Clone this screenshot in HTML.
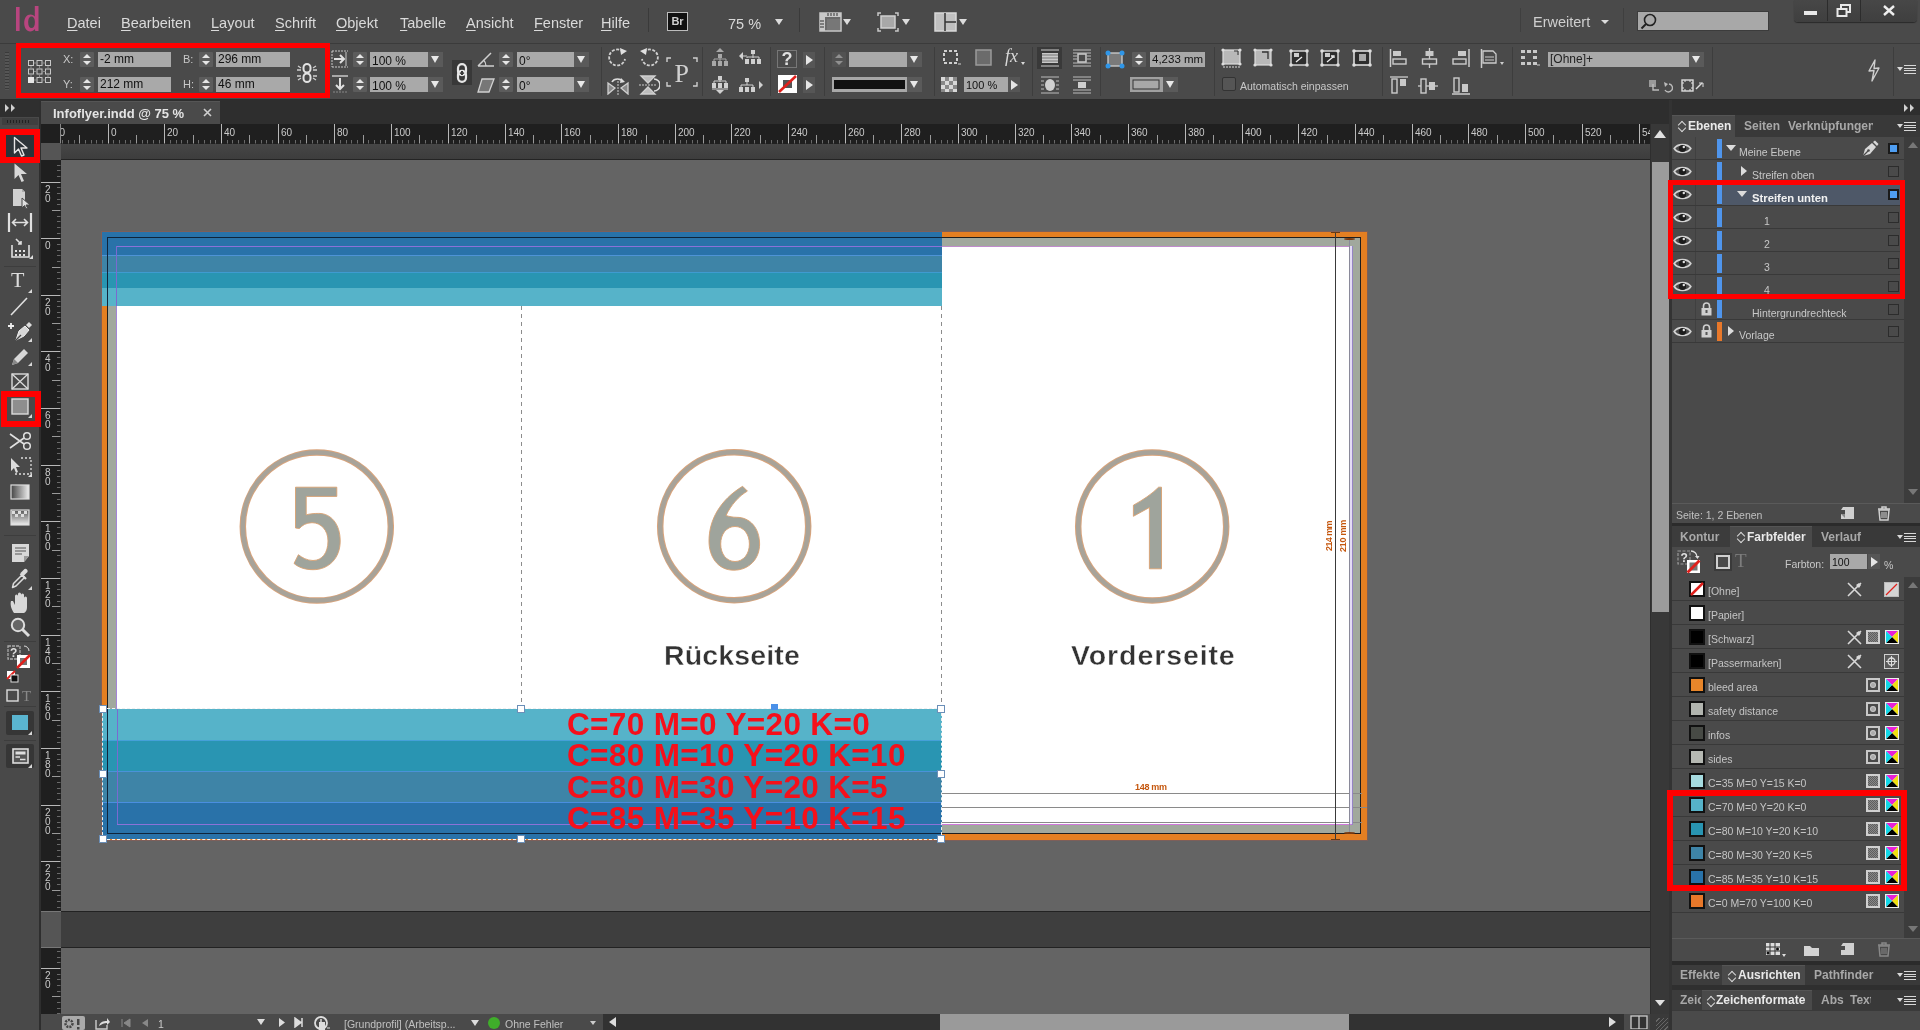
<!DOCTYPE html>
<html><head><meta charset="utf-8">
<style>
*{box-sizing:border-box;margin:0;padding:0}
html,body{width:1920px;height:1030px;overflow:hidden;background:#4a4a4a;font-family:"Liberation Sans",sans-serif;position:relative}
body{will-change:transform}
.a,.mi,.tri,.lbl,.spin,.fld,.dd,.arb,.sep,.menuic,.ctri,.hd,.lt,.tabt,.tab{position:absolute}
.mi{top:15px;font-size:14.5px;color:#dadada;white-space:nowrap}
.mi u{text-decoration:underline;text-underline-offset:2px;text-decoration-thickness:1px}
.tri{width:0;height:0;border-style:solid;border-width:6px 4.5px 0 4.5px;border-color:#dcdcdc transparent transparent}
.lbl{font-size:11px;color:#c8c8c8;white-space:nowrap}
.spin{width:14px;height:15px;background:#5c5c5c;border-radius:1px}
.spin:before{content:"";position:absolute;left:3px;top:2px;border-style:solid;border-width:0 4px 4px 4px;border-color:transparent transparent #e6e6e6}
.spin:after{content:"";position:absolute;left:3px;top:9px;border-style:solid;border-width:4px 4px 0 4px;border-color:#e6e6e6 transparent transparent}
.fld{height:15px;background:#a9a9a9;color:#111;font-size:12px;line-height:15px;padding-left:2px;white-space:nowrap;overflow:hidden}
.dd{width:15px;height:15px;background:#5a5a5a}
.dd:after{content:"";position:absolute;left:3px;top:4px;border-style:solid;border-width:7px 4.5px 0 4.5px;border-color:#e8e8e8 transparent transparent}
.arb{width:12px;height:16px;background:#565656}
.arb:after{content:"";position:absolute;left:3px;top:3px;border-style:solid;border-width:5px 0 5px 7px;border-color:transparent transparent transparent #e6e6e6}
.sep{top:47px;width:1px;height:49px;background:#3d3d3d}
.menuic{width:19px;height:9px}
.menuic:before{content:"";position:absolute;left:0;top:2px;border-style:solid;border-width:4px 3px 0 3px;border-color:#d8d8d8 transparent transparent}
.menuic:after{content:"";position:absolute;left:7px;top:0;width:12px;height:9px;background:repeating-linear-gradient(#d8d8d8 0 1px,transparent 1px 2.66px)}
.ctri{width:0;height:0;border-style:solid;border-width:0 0 4px 4px;border-color:transparent transparent #d8d8d8 transparent}
.hd{width:8px;height:8px;background:#fff;border:1px solid #6b8fb8}
.lt{font-size:10.5px;color:#c8c8c8;white-space:nowrap;line-height:13px}
.tabt{font-size:12px;font-weight:bold;color:#a8a8a8;white-space:nowrap;line-height:15px}
.tabt.act{color:#eaeaea}
.tab{width:9px;height:14px}
.ud{position:absolute;left:0;top:0;width:9px;height:14px}
.ud:before{content:"";position:absolute;left:1.5px;top:2.5px;width:5px;height:5px;border-left:1.5px solid #d8d8d8;border-top:1.5px solid #d8d8d8;transform:rotate(45deg)}
.ud:after{content:"";position:absolute;left:1.5px;top:5.5px;width:5px;height:5px;border-right:1.5px solid #d8d8d8;border-bottom:1.5px solid #d8d8d8;transform:rotate(45deg)}
</style></head><body>
<!-- MENUBAR -->
<div class="a" style="left:0;top:0;width:1920px;height:43px;background:#4a4a4a"></div>
<svg class="a" style="left:14px;top:6px" width="30" height="28" viewBox="0 0 30 28"><rect x="2" y="1" width="3.6" height="24" fill="#b8457f"/><path d="M22.5 0 v25 h-3.3 l-0.2 -2 c-1.2 1.6 -3 2.4 -4.8 2.4 c-3.7 0 -6 -3.4 -6 -8.3 c0 -5.2 2.6 -8.6 6.3 -8.6 c1.8 0 3.3 0.8 4.3 2 v-10.5 z M15.5 10.5 c-2.3 0 -3.3 2.6 -3.3 6 c0 3.3 1.1 5.6 3.3 5.6 c2.2 0 3.4 -2.3 3.4 -5.8 c0 -3.4 -1.2 -5.8 -3.4 -5.8 z" fill="#b8457f" transform="translate(2,0)"/></svg>
<div class="mi" style="left:67px"><u>D</u>atei</div>
<div class="mi" style="left:121px"><u>B</u>earbeiten</div>
<div class="mi" style="left:211px"><u>L</u>ayout</div>
<div class="mi" style="left:275px"><u>S</u>chrift</div>
<div class="mi" style="left:336px"><u>O</u>bjekt</div>
<div class="mi" style="left:400px"><u>T</u>abelle</div>
<div class="mi" style="left:466px"><u>A</u>nsicht</div>
<div class="mi" style="left:534px"><u>F</u>enster</div>
<div class="mi" style="left:601px"><u>H</u>ilfe</div>
<div class="a" style="left:648px;top:8px;width:1px;height:24px;background:#3a3a3a"></div>
<div class="a" style="left:667px;top:12px;width:21px;height:19px;background:#111;border:1px solid #bdbdbd;color:#d0d0d0;font-size:11px;font-weight:bold;line-height:17px;text-align:center">Br</div>
<div class="mi" style="left:728px;top:16px;font-size:14.5px;color:#d8d8d8">75 %</div>
<div class="tri" style="left:775px;top:19px"></div>
<div class="a" style="left:799px;top:8px;width:1px;height:24px;background:#3a3a3a"></div>
<svg class="a" style="left:819px;top:12px" width="23" height="20"><rect x="1" y="1" width="21" height="18" fill="#6a6a6a" stroke="#c8c8c8" stroke-width="1.5"/><rect x="1" y="1" width="21" height="4" fill="#c8c8c8"/><rect x="1" y="1" width="5" height="18" fill="#c8c8c8"/><rect x="8" y="7" width="13" height="11" fill="#777"/><path d="M9 1v3M12 1v3M15 1v3M18 1v3M1 9h4M1 12h4M1 15h4" stroke="#333" stroke-width="1"/></svg>
<div class="tri" style="left:843px;top:19px"></div>
<svg class="a" style="left:877px;top:12px" width="22" height="20"><path d="M1 4V1h3M18 1h3v3M21 16v3h-3M4 19H1v-3" stroke="#c8c8c8" stroke-width="1.5" fill="none"/><rect x="4" y="4" width="14" height="12" fill="#a8a8a8" stroke="#d0d0d0" stroke-width="1.5"/></svg>
<div class="tri" style="left:902px;top:19px"></div>
<svg class="a" style="left:934px;top:12px" width="23" height="20"><rect x="1" y="1" width="21" height="18" fill="#c0c0c0" stroke="#d8d8d8" stroke-width="1.5"/><path d="M11 1v18M11 10h11" stroke="#333" stroke-width="1.5"/></svg>
<div class="tri" style="left:959px;top:19px"></div>
<div class="a" style="left:1520px;top:8px;width:1px;height:24px;background:#3f3f3f"></div>
<div class="mi" style="left:1533px;top:14px;font-size:14.5px;color:#cfcfcf">Erweitert</div>
<div class="tri" style="left:1601px;top:20px;border-width:4px 4px 0 4px"></div>
<div class="a" style="left:1623px;top:8px;width:1px;height:24px;background:#3f3f3f"></div>
<div class="a" style="left:1637px;top:11px;width:132px;height:20px;background:#a8a8a8;border:1px solid #3c3c3c"></div>
<svg class="a" style="left:1640px;top:13px" width="18" height="18"><circle cx="10" cy="7" r="5.5" stroke="#222" stroke-width="1.6" fill="none"/><path d="M6 11 L1.5 15.5" stroke="#222" stroke-width="2"/></svg>
<div class="a" style="left:1794px;top:0;width:123px;height:22px;background:linear-gradient(#474747,#3f3f3f);border-radius:0 0 4px 4px;box-shadow:0 1px 1px #2a2a2a"></div>
<div class="a" style="left:1827px;top:0;width:1px;height:21px;background:#2c2c2c"></div>
<div class="a" style="left:1860px;top:0;width:1px;height:21px;background:#2c2c2c"></div>
<div class="a" style="left:1804px;top:11px;width:13px;height:4px;background:#e8e8e8"></div>
<svg class="a" style="left:1836px;top:4px" width="16" height="14"><rect x="5" y="1" width="9" height="7" fill="none" stroke="#e8e8e8" stroke-width="2"/><rect x="1.5" y="5" width="9" height="7" fill="#3e3e3e" stroke="#e8e8e8" stroke-width="2"/></svg>
<svg class="a" style="left:1882px;top:4px" width="14" height="13"><path d="M2 2 L12 11 M12 2 L2 11" stroke="#eee" stroke-width="2.4"/></svg>
<!-- CONTROL BAR -->
<div class="a" style="left:0;top:43px;width:1920px;height:57px;background:#4a4a4a;border-top:1px solid #3b3b3b;border-bottom:1px solid #2c2c2c"></div>
<div class="a" style="left:5px;top:52px;width:4px;height:38px;background:repeating-linear-gradient(#3a3a3a 0 1px,#555 1px 3px)"></div>
<div class="a" style="left:16px;top:43px;width:314px;height:55px;border:5px solid #f00"></div>
<svg class="a" style="left:27px;top:59px" width="25" height="25"><g fill="none" stroke="#c8c8c8" stroke-width="1"><rect x="1.5" y="1.5" width="5" height="5"/><rect x="10" y="1.5" width="5" height="5"/><rect x="18.5" y="1.5" width="5" height="5"/><rect x="1.5" y="10" width="5" height="5"/><rect x="10" y="10" width="5" height="5"/><rect x="18.5" y="10" width="5" height="5"/><rect x="10" y="18.5" width="5" height="5"/><rect x="18.5" y="18.5" width="5" height="5"/></g><rect x="1" y="18" width="6" height="6" fill="#e6e6e6"/><path d="M7 4h3M15 4h3.5M7 12.5h3M15 12.5h3.5M7 21h3M15 21h3.5M4 7v3M4 15v3M12.5 7v3M12.5 15v3.5M21 7v3M21 15v3.5" stroke="#8a8a8a" stroke-width="1"/></svg>
<div class="lbl" style="left:63px;top:53px">X:</div>
<div class="lbl" style="left:63px;top:78px">Y:</div>
<div class="spin" style="left:80px;top:52px"></div>
<div class="spin" style="left:80px;top:77px"></div>
<div class="fld" style="left:98px;top:52px;width:73px">-2 mm</div>
<div class="fld" style="left:98px;top:77px;width:73px">212 mm</div>
<div class="lbl" style="left:183px;top:53px">B:</div>
<div class="lbl" style="left:183px;top:78px">H:</div>
<div class="spin" style="left:199px;top:52px"></div>
<div class="spin" style="left:199px;top:77px"></div>
<div class="fld" style="left:216px;top:52px;width:74px">296 mm</div>
<div class="fld" style="left:216px;top:77px;width:74px">46 mm</div>
<svg class="a" style="left:296px;top:63px" width="22" height="20"><g stroke="#e2e2e2" stroke-width="2" fill="none"><rect x="7.5" y="1" width="7" height="8.5" rx="3.5"/><rect x="7.5" y="10.5" width="7" height="8.5" rx="3.5"/></g><path d="M1 7h4M17 7h4M1 13h4M17 13h4M2 3l3 2M20 3l-3 2M2 17l3-2M20 17l-3-2" stroke="#cfcfcf" stroke-width="1.3"/></svg>

<svg class="a" style="left:331px;top:50px" width="18" height="18"><path d="M1 1v16M1 1h16M1 17h16" stroke="#c8c8c8" stroke-width="1" stroke-dasharray="2 1" fill="none"/><path d="M3 9h9M9 5l4 4-4 4" stroke="#e0e0e0" stroke-width="2" fill="none"/><path d="M15 2v14" stroke="#c8c8c8"/></svg>
<svg class="a" style="left:331px;top:75px" width="18" height="18"><path d="M1 1h16" stroke="#c8c8c8" stroke-width="1.5"/><path d="M9 3v11M5 10l4 4 4-4" stroke="#e0e0e0" stroke-width="2" fill="none"/><path d="M2 17h14" stroke="#888" stroke-dasharray="2 1"/></svg>
<div class="spin" style="left:353px;top:52px"></div>
<div class="spin" style="left:353px;top:77px"></div>
<div class="fld" style="left:370px;top:52px;width:58px;padding-top:2px">100 %</div>
<div class="fld" style="left:370px;top:77px;width:58px;padding-top:2px">100 %</div>
<div class="dd" style="left:428px;top:52px"></div>
<div class="dd" style="left:428px;top:77px"></div>
<div class="a" style="left:452px;top:60px;width:20px;height:25px;background:#383838"></div>
<svg class="a" style="left:456px;top:63px" width="12" height="20"><g stroke="#e6e6e6" stroke-width="2.2" fill="none"><rect x="2" y="1.2" width="8" height="11" rx="4"/><rect x="2" y="7.8" width="8" height="11" rx="4"/></g><rect x="5" y="8" width="2" height="4" fill="#383838"/></svg>
<svg class="a" style="left:477px;top:51px" width="18" height="16"><path d="M1 15 L14 2 M1 15 H17" stroke="#d0d0d0" stroke-width="1.5" fill="none"/><path d="M9 15 a8 8 0 0 0 -2.5 -6" stroke="#d0d0d0" stroke-width="1.2" fill="none"/></svg>
<svg class="a" style="left:477px;top:77px" width="18" height="16"><path d="M5 2 H17 L12 15 H1 Z" stroke="#d0d0d0" stroke-width="1.3" fill="#777"/></svg>
<div class="spin" style="left:499px;top:52px"></div>
<div class="spin" style="left:499px;top:77px"></div>
<div class="fld" style="left:517px;top:52px;width:57px;padding-top:2px">0°</div>
<div class="fld" style="left:517px;top:77px;width:57px;padding-top:2px">0°</div>
<div class="dd" style="left:574px;top:52px"></div>
<div class="dd" style="left:574px;top:77px"></div>
<div class="sep" style="left:601px"></div>
<svg class="a" style="left:607px;top:47px" width="22" height="20"><path d="M16 5 A8 8 0 1 0 18 12" stroke="#d0d0d0" stroke-width="1.8" stroke-dasharray="3 1.5" fill="none"/><path d="M13 1 l7 3 -6 4 z" fill="#e0e0e0"/></svg>
<svg class="a" style="left:638px;top:47px" width="22" height="20"><path d="M6 5 A8 8 0 1 1 4 12" stroke="#d0d0d0" stroke-width="1.8" stroke-dasharray="3 1.5" fill="none"/><path d="M9 1 l-7 3 6 4 z" fill="#e0e0e0"/></svg>
<svg class="a" style="left:607px;top:75px" width="22" height="20"><path d="M1 8 L8 13 L1 19 Z M21 8 L14 13 L21 19 Z" stroke="#d0d0d0" stroke-width="1.3" fill="#8a8a8a"/><path d="M11 6v14" stroke="#ccc" stroke-dasharray="2 1"/><path d="M5 7 a6 5 0 0 1 11 0" stroke="#ddd" stroke-width="1.6" fill="none"/><path d="M14 3 l4 4 -5 1z" fill="#ddd"/></svg>
<svg class="a" style="left:638px;top:75px" width="22" height="20"><path d="M3 1 L17 1 L10 8 Z M3 19 L17 19 L10 12 Z" stroke="#d0d0d0" stroke-width="1.3" fill="#bdbdbd"/><path d="M1 10h18" stroke="#ccc" stroke-dasharray="2 1"/><path d="M16 4 a6 6 0 0 1 0 12" stroke="#ddd" stroke-width="1.6" fill="none"/></svg>
<svg class="a" style="left:666px;top:57px" width="32" height="30"><path d="M1 5V1h4M27 1h4v4M31 25v4h-4M5 29H1v-4" stroke="#cfcfcf" stroke-width="1.4" fill="none"/><text x="8.5" y="25" font-family="Liberation Serif" font-size="26" fill="#d0d0d0">P</text></svg>
<div class="sep" style="left:702px"></div>
<svg class="a" style="left:710px;top:47px" width="20" height="20"><g fill="#a8a8a8"><path d="M10 1 l4 4 h-8z"/><rect x="8" y="7" width="4" height="4"/><rect x="2" y="14" width="4" height="5"/><rect x="8" y="14" width="4" height="5"/><rect x="14" y="14" width="4" height="5"/></g><path d="M4 14v-2h12v2M10 11v3" stroke="#a8a8a8" fill="none"/></svg>
<svg class="a" style="left:738px;top:49px" width="26" height="16"><g fill="#d0d0d0"><path d="M1 7 l4 -4 v8z"/><rect x="13" y="1" width="4" height="4"/><rect x="7" y="10" width="4" height="5"/><rect x="13" y="10" width="4" height="5"/><rect x="19" y="10" width="4" height="5"/></g><path d="M5 7h4M9 9v-1h12v2M15 5v4" stroke="#d0d0d0" fill="none"/></svg>
<svg class="a" style="left:710px;top:75px" width="20" height="20"><g fill="#d0d0d0"><rect x="8" y="1" width="4" height="4"/><rect x="2" y="8" width="4" height="5"/><rect x="8" y="8" width="4" height="5"/><rect x="14" y="8" width="4" height="5"/><path d="M10 19 l4 -4 h-8z"/></g><path d="M4 8v-2h12v2M10 5v2M2 14h16" stroke="#d0d0d0" fill="none"/></svg>
<svg class="a" style="left:738px;top:77px" width="26" height="16"><g fill="#d0d0d0"><rect x="7" y="1" width="4" height="4"/><rect x="1" y="10" width="4" height="5"/><rect x="7" y="10" width="4" height="5"/><rect x="13" y="10" width="4" height="5"/><path d="M25 8 l-4 -4 v8z"/></g><path d="M3 10v-2h12v2M9 5v3" stroke="#d0d0d0" fill="none"/></svg>
<div class="sep" style="left:770px"></div>
<div class="a" style="left:777px;top:50px;width:20px;height:18px;border:1px solid #777;background:#4a4a4a;color:#e0e0e0;font-size:18px;font-weight:bold;line-height:17px;text-align:center">?</div>
<svg class="a" style="left:778px;top:75px" width="19" height="18"><rect x="0" y="0" width="19" height="18" fill="#fff"/><rect x="5" y="5" width="9" height="8" fill="#555"/><path d="M1 17 L18 1" stroke="#e0201c" stroke-width="2.6"/></svg>
<div class="arb" style="left:803px;top:52px"></div>
<div class="arb" style="left:803px;top:77px"></div>
<div class="sep" style="left:824px"></div>
<div class="spin" style="left:832px;top:52px;opacity:.45"></div>
<div class="fld" style="left:849px;top:52px;width:58px"></div>
<div class="dd" style="left:907px;top:52px"></div>
<div class="a" style="left:832px;top:77px;width:75px;height:15px;background:#111;border:2px solid #a8a8a8;border-top-width:3px;border-bottom-width:3px"></div>
<div class="dd" style="left:907px;top:77px"></div>
<div class="sep" style="left:934px"></div>
<svg class="a" style="left:942px;top:49px" width="20" height="18"><rect x="2" y="2" width="13" height="12" fill="none" stroke="#d0d0d0" stroke-width="2" stroke-dasharray="3 2"/><path d="M16 15h3" stroke="#d0d0d0"/></svg>
<svg class="a" style="left:975px;top:49px" width="18" height="18"><rect x="1" y="1" width="15" height="15" fill="#6b6b6b" stroke="#9a9a9a" stroke-width="1.5"/></svg>
<div class="a" style="left:1005px;top:46px;font-family:'Liberation Serif';font-style:italic;font-size:18px;color:#d8d8d8">fx</div>
<div class="a" style="left:1021px;top:62px;width:0;height:0;border-style:solid;border-width:3px 2px 0 2px;border-color:#d8d8d8 transparent transparent"></div>
<svg class="a" style="left:941px;top:77px" width="16" height="15"><rect x="0" y="0" width="16" height="15" fill="#d8d8d8"/><g fill="#888"><rect x="4" y="0" width="4" height="4"/><rect x="12" y="0" width="4" height="4"/><rect x="0" y="4" width="4" height="4"/><rect x="8" y="4" width="4" height="4"/><rect x="4" y="8" width="4" height="4"/><rect x="12" y="8" width="4" height="4"/><rect x="0" y="12" width="4" height="3"/><rect x="8" y="12" width="4" height="3"/></g></svg>
<div class="fld" style="left:964px;top:77px;width:44px;padding-top:1px;font-size:11px">100 %</div>
<div class="arb" style="left:1008px;top:77px;height:15px"></div>
<div class="sep" style="left:1032px"></div>
<div class="a" style="left:1037px;top:47px;width:25px;height:22px;background:#393939"></div>
<svg class="a" style="left:1040px;top:49px" width="20" height="18"><path d="M1 1h18M1 17h18" stroke="#ccc"/><rect x="2" y="4" width="16" height="10" fill="#c8c8c8"/><path d="M2 6h16M2 9h16M2 12h16" stroke="#777"/></svg>
<svg class="a" style="left:1072px;top:49px" width="20" height="18"><path d="M1 1h18M1 4h18M1 14h18M1 17h18M1 7h4M15 7h4M1 10h4M15 10h4" stroke="#bbb"/><rect x="6" y="5" width="8" height="8" fill="none" stroke="#ccc" stroke-width="1.5"/></svg>
<svg class="a" style="left:1040px;top:76px" width="20" height="18"><path d="M1 1h18M1 17h18M1 5h3M16 5h3M1 9h3M16 9h3M1 13h3M16 13h3" stroke="#bbb"/><ellipse cx="10" cy="9" rx="5" ry="6" fill="#cfcfcf"/></svg>
<svg class="a" style="left:1072px;top:76px" width="20" height="18"><path d="M1 1h18M1 4h18M1 14h18M1 17h18" stroke="#bbb"/><rect x="6" y="6" width="8" height="6" fill="#cfcfcf"/></svg>
<div class="sep" style="left:1100px"></div>
<svg class="a" style="left:1105px;top:50px" width="20" height="19"><rect x="3" y="3" width="14" height="13" fill="#7a7a7a" stroke="#cfcfcf" stroke-width="1.3"/><g fill="#2f96e8"><circle cx="3" cy="3" r="2.5"/><circle cx="17" cy="3" r="2.5"/><circle cx="3" cy="16" r="2.5"/><circle cx="17" cy="16" r="2.5"/></g></svg>
<div class="spin" style="left:1132px;top:52px"></div>
<div class="fld" style="left:1150px;top:52px;width:55px;font-size:11.5px">4,233 mm</div>
<svg class="a" style="left:1130px;top:77px" width="34" height="15"><rect x="0" y="0" width="34" height="15" fill="#a0a0a0"/><rect x="3" y="3" width="26" height="9" fill="#a8a8a8" stroke="#333" stroke-width="1"/></svg>
<div class="dd" style="left:1163px;top:77px"></div>
<div class="sep" style="left:1214px"></div>
<svg class="a" style="left:1221px;top:48px" width="22" height="20"><rect x="2" y="2" width="17" height="14" fill="#b8b8b8" stroke="#ddd" stroke-width="1.2"/><g fill="#ddd"><circle cx="2" cy="2" r="1.6"/><circle cx="19" cy="2" r="1.6"/><circle cx="2" cy="16" r="1.6"/><circle cx="19" cy="16" r="1.6"/></g><path d="M2 19h17" stroke="#ddd" stroke-dasharray="2 1"/><path d="M13 3 l4 0 0 4" stroke="#333" fill="none"/></svg>
<svg class="a" style="left:1252px;top:48px" width="22" height="20"><rect x="3" y="2" width="16" height="15" fill="#b8b8b8" stroke="#ddd" stroke-width="1.2"/><g fill="#ddd"><circle cx="3" cy="2" r="1.6"/><circle cx="19" cy="2" r="1.6"/><circle cx="3" cy="17" r="1.6"/><circle cx="19" cy="17" r="1.6"/></g><path d="M10 4h6v7" stroke="#333" fill="none" stroke-width="1.3"/></svg>
<svg class="a" style="left:1288px;top:48px" width="22" height="20"><rect x="3" y="3" width="16" height="14" fill="#2e2e2e" stroke="#ddd" stroke-width="1.4"/><g fill="#ddd"><circle cx="3" cy="3" r="1.8"/><circle cx="19" cy="3" r="1.8"/><circle cx="3" cy="17" r="1.8"/><circle cx="19" cy="17" r="1.8"/></g><rect x="6" y="5" width="5" height="4" fill="#ccc"/><path d="M8 14 l6 -5" stroke="#eee" stroke-width="1.3"/></svg>
<svg class="a" style="left:1319px;top:48px" width="22" height="20"><rect x="3" y="3" width="16" height="14" fill="#2e2e2e" stroke="#ddd" stroke-width="1.4"/><g fill="#ddd"><circle cx="3" cy="3" r="1.8"/><circle cx="19" cy="3" r="1.8"/><circle cx="3" cy="17" r="1.8"/><circle cx="19" cy="17" r="1.8"/></g><rect x="6" y="5" width="5" height="4" fill="#ccc"/><path d="M8 14 l6 -5 M12 8h3v2" stroke="#eee" stroke-width="1.3" fill="none"/></svg>
<svg class="a" style="left:1351px;top:48px" width="22" height="20"><rect x="3" y="3" width="16" height="14" fill="#2e2e2e" stroke="#ddd" stroke-width="1.6"/><g fill="#ddd"><circle cx="3" cy="3" r="1.8"/><circle cx="19" cy="3" r="1.8"/><circle cx="3" cy="17" r="1.8"/><circle cx="19" cy="17" r="1.8"/></g><rect x="8" y="6" width="7" height="7" fill="#aaa"/></svg>
<div class="a" style="left:1222px;top:77px;width:14px;height:14px;background:#555;border:1px solid #333;border-radius:2px"></div>
<div class="lbl" style="left:1240px;top:80px;font-size:10.5px">Automatisch einpassen</div>
<div class="sep" style="left:1382px"></div>
<svg class="a" style="left:1389px;top:48px" width="20" height="20"><path d="M1.5 1v18" stroke="#ccc" stroke-width="1.5"/><rect x="4" y="3" width="8" height="5" fill="#c8c8c8"/><rect x="4" y="11" width="13" height="5" fill="none" stroke="#ccc" stroke-width="1.4"/></svg>
<svg class="a" style="left:1420px;top:48px" width="20" height="20"><path d="M9.5 0v20" stroke="#ccc" stroke-width="1.3"/><rect x="5.5" y="3" width="8" height="5" fill="#c8c8c8"/><rect x="2.5" y="11" width="14" height="5" fill="#4a4a4a" stroke="#ccc" stroke-width="1.4"/></svg>
<svg class="a" style="left:1451px;top:48px" width="20" height="20"><path d="M18 1v18" stroke="#ccc" stroke-width="1.5"/><rect x="7" y="3" width="8" height="5" fill="#c8c8c8"/><rect x="2" y="11" width="13" height="5" fill="none" stroke="#ccc" stroke-width="1.4"/></svg>
<svg class="a" style="left:1480px;top:48px" width="26" height="20"><path d="M1.5 1v19" stroke="#ccc" stroke-width="1.5"/><path d="M3 3h10l3 3v9H3z" fill="none" stroke="#ccc" stroke-width="1.3"/><path d="M5 9h9M5 12h9" stroke="#ccc"/><path d="M20 14 l4 0 -2 3z" fill="#ccc"/></svg>
<svg class="a" style="left:1389px;top:76px" width="20" height="20"><path d="M1 1h18" stroke="#ccc" stroke-width="1.3"/><rect x="3" y="3" width="5" height="14" fill="none" stroke="#ccc" stroke-width="1.4"/><rect x="11" y="3" width="6" height="7" fill="#c8c8c8"/></svg>
<svg class="a" style="left:1418px;top:76px" width="20" height="20"><path d="M0 10h20" stroke="#ccc" stroke-width="1.3"/><rect x="3" y="3" width="5" height="14" fill="#4a4a4a" stroke="#ccc" stroke-width="1.4"/><rect x="11" y="6" width="6" height="8" fill="#c8c8c8"/></svg>
<svg class="a" style="left:1451px;top:76px" width="20" height="20"><path d="M1 18h18" stroke="#ccc" stroke-width="1.5"/><rect x="3" y="2" width="5" height="14" fill="none" stroke="#ccc" stroke-width="1.4"/><rect x="11" y="8" width="6" height="8" fill="#c8c8c8"/></svg>
<div class="sep" style="left:1512px"></div>
<svg class="a" style="left:1520px;top:48px" width="20" height="20"><g fill="#c8c8c8"><rect x="1" y="2" width="4" height="3"/><rect x="7" y="2" width="4" height="3"/><rect x="13" y="2" width="4" height="3"/><rect x="1" y="8" width="4" height="3"/><rect x="13" y="8" width="4" height="3"/><rect x="1" y="14" width="4" height="3"/><rect x="7" y="14" width="4" height="3"/><rect x="13" y="14" width="4" height="3"/></g><path d="M17 17h3" stroke="#ccc"/></svg>
<div class="fld" style="left:1548px;top:52px;width:141px;color:#222">[Ohne]+</div>
<div class="dd" style="left:1689px;top:52px"></div>
<svg class="a" style="left:1647px;top:79px" width="26" height="15"><rect x="2" y="1" width="7" height="7" fill="#999"/><path d="M6 5v6h6" stroke="#bbb" fill="none" stroke-width="1.4"/><path d="M22 5 a4 4 0 1 1 -4 6" stroke="#bbb" fill="none" stroke-width="1.4"/><path d="M17 3l4 2-3 3z" fill="#bbb"/></svg>
<svg class="a" style="left:1681px;top:79px" width="24" height="15"><rect x="1" y="1" width="11" height="11" fill="none" stroke="#ddd" stroke-width="1.4"/><path d="M1 4h2M1 9h2M10 4h2M10 9h2M4 1v2M9 1v2M4 10v2M9 10v2" stroke="#ddd"/><path d="M15 10 l6 -6" stroke="#ddd" stroke-width="1.5"/><path d="M18 4h4v4" stroke="#ddd" fill="none"/></svg>
<div class="sep" style="left:1712px"></div>
<svg class="a" style="left:1866px;top:59px" width="16" height="23"><path d="M9 1 L3 12 L8 11.5 L6 22 L13 9 L8 9.5 Z" fill="none" stroke="#cfcfcf" stroke-width="1.4" stroke-linejoin="round"/></svg>
<div class="sep" style="left:1893px"></div>
<div class="menuic" style="left:1897px;top:65px"></div>
<!-- TOOLBAR -->
<div class="a" style="left:0;top:100px;width:41px;height:930px;background:#494949;border-right:2px solid #2e2e2e"></div>
<div class="a" style="left:0;top:100px;width:39px;height:17px;background:#2f2f2f"></div>
<svg class="a" style="left:5px;top:104px" width="12" height="8"><path d="M0 0l4 4-4 4zM6 0l4 4-4 4z" fill="#d0d0d0"/></svg>
<div class="a" style="left:2px;top:118px;width:36px;height:7px;background:#3f3f3f"></div>
<div class="a" style="left:7px;top:120px;width:24px;height:3px;background:repeating-linear-gradient(90deg,#222 0 1px,transparent 1px 3px)"></div>
<div class="a" style="left:0;top:129px;width:40px;height:34px;border:6px solid #f00"></div>
<div class="a" style="left:6px;top:135px;width:28px;height:22px;background:#2c3439"></div>
<svg class="a" style="left:13px;top:136px" width="16" height="22"><path d="M1.5 1.5 V17 L5.5 13 L8.5 20 L11 19 L8 12 H14 Z" fill="#2c3439" stroke="#e6e6e6" stroke-width="1.4" stroke-linejoin="round"/></svg>
<svg class="a" style="left:13px;top:162px" width="16" height="22"><path d="M1.5 1.5 V17 L5.5 13 L8.5 20 L11 19 L8 12 H14 Z" fill="#d8d8d8"/></svg>
<svg class="a" style="left:12px;top:188px" width="20" height="22"><path d="M1 1h9l3 3v14H1z" fill="#d0d0d0"/><path d="M10 1v3h3" fill="#aaa"/><path d="M10 10 V20 L12.5 17.5 L14 21 L15.5 20 L14 17 H18 Z" fill="#e0e0e0" stroke="#494949" stroke-width="1"/></svg>
<svg class="a" style="left:7px;top:212px" width="26" height="21"><path d="M2 1v19M24 1v19" stroke="#e0e0e0" stroke-width="2.2"/><path d="M6 10.5h14M9 7l-3.5 3.5L9 14M17 7l3.5 3.5L17 14" stroke="#e0e0e0" stroke-width="1.6" fill="none"/></svg>
<svg class="a" style="left:10px;top:237px" width="24" height="22"><path d="M2 8v12h17V8" stroke="#e0e0e0" stroke-width="1.6" fill="none"/><g fill="#e0e0e0"><rect x="5" y="13" width="2" height="2"/><rect x="9" y="13" width="2" height="2"/><rect x="13" y="13" width="2" height="2"/><rect x="5" y="17" width="2" height="2"/><rect x="9" y="17" width="2" height="2"/><rect x="13" y="17" width="2" height="2"/></g><path d="M6 2 l5 5M8 7h3V4" stroke="#e0e0e0" stroke-width="1.6" fill="none"/><path d="M19 22l4-4v4z" fill="#ddd"/></svg>
<div class="a" style="left:4px;top:266px;width:32px;height:1px;background:#3d3d3d"></div>
<div class="a" style="left:11px;top:268px;font-family:'Liberation Serif';font-size:22px;color:#dcdcdc;line-height:24px">T</div>
<div class="ctri" style="left:28px;top:289px"></div>
<svg class="a" style="left:10px;top:297px" width="18" height="19"><path d="M1 18 L17 1" stroke="#e0e0e0" stroke-width="1.6"/></svg>
<svg class="a" style="left:7px;top:321px" width="26" height="22"><path d="M1 5h6M4 2v6" stroke="#eee" stroke-width="1.8"/><path d="M9 19 L12 10 L18 5 L22 9 L17 15 Z" fill="#d8d8d8" stroke="#eee" stroke-width="1"/><path d="M9 19 l5-5" stroke="#494949" stroke-width="1.2"/><path d="M19 4l3-3 3 3-3 3z" fill="#ddd"/></svg>
<div class="ctri" style="left:28px;top:338px"></div>
<svg class="a" style="left:10px;top:347px" width="20" height="20"><path d="M2 18 L4 12 L14 2 L18 6 L8 16 Z" fill="#d8d8d8"/><path d="M2 18 l2-6 4 4z" fill="#888"/></svg>
<div class="ctri" style="left:28px;top:362px"></div>
<svg class="a" style="left:11px;top:373px" width="19" height="18"><rect x="1" y="1" width="16" height="15" fill="none" stroke="#dcdcdc" stroke-width="1.4"/><path d="M1 1l16 15M17 1L1 16" stroke="#dcdcdc" stroke-width="1.3"/></svg>
<div class="a" style="left:1px;top:391px;width:40px;height:36px;border:6px solid #f00"></div>
<svg class="a" style="left:11px;top:398px" width="19" height="18"><rect x="1" y="1" width="16" height="15" fill="#8e8e8e" stroke="#dcdcdc" stroke-width="1.4"/></svg>
<div class="ctri" style="left:28px;top:414px"></div>
<svg class="a" style="left:9px;top:431px" width="23" height="20"><circle cx="18" cy="5" r="3.3" fill="none" stroke="#e0e0e0" stroke-width="1.5"/><circle cx="18" cy="15" r="3.3" fill="none" stroke="#e0e0e0" stroke-width="1.5"/><path d="M1 3 L15 13 M1 17 L15 7" stroke="#e0e0e0" stroke-width="1.6"/></svg>
<svg class="a" style="left:9px;top:456px" width="24" height="22"><path d="M2 2 V15 L5 12 L7 17 L9 16 L7 11 H11 Z" fill="#ddd"/><path d="M12 2h10v16H6" stroke="#ddd" stroke-width="1.3" stroke-dasharray="2 2" fill="none"/><path d="M19 21l4-4v4z" fill="#ddd"/></svg>
<svg class="a" style="left:10px;top:484px" width="20" height="16"><defs><linearGradient id="gr1"><stop offset="0" stop-color="#444"/><stop offset="1" stop-color="#eee"/></linearGradient></defs><rect x="1" y="1" width="18" height="14" fill="url(#gr1)" stroke="#ddd" stroke-width="1.2"/></svg>
<svg class="a" style="left:10px;top:509px" width="20" height="17"><defs><linearGradient id="gr2" x1="0" y1="0" x2="0" y2="1"><stop offset="0" stop-color="#555"/><stop offset="1" stop-color="#eee"/></linearGradient></defs><rect x="1" y="1" width="18" height="15" fill="url(#gr2)" stroke="#ddd" stroke-width="1.2"/><g fill="#ddd"><rect x="2" y="2" width="3" height="3"/><rect x="8" y="2" width="3" height="3"/><rect x="14" y="2" width="3" height="3"/><rect x="5" y="5" width="3" height="3"/><rect x="11" y="5" width="3" height="3"/></g></svg>
<div class="a" style="left:4px;top:535px;width:32px;height:1px;background:#3d3d3d"></div>
<svg class="a" style="left:11px;top:543px" width="19" height="20"><path d="M1 1h17v12l-5 6H1z" fill="#d8d8d8"/><path d="M4 5h11M4 8h11M4 11h7" stroke="#555" stroke-width="1.2"/><path d="M13 19v-6h5" fill="#999"/></svg>
<svg class="a" style="left:10px;top:567px" width="21" height="22"><path d="M2.5 20.5 L3.5 16.5 L12 8 L14.5 10.5 L6 19 Z" fill="#4a4a4a" stroke="#dcdcdc" stroke-width="1.5" stroke-linejoin="round"/><path d="M10.5 6.5 L16 12" stroke="#dcdcdc" stroke-width="2.2"/><path d="M13.5 9 L17.5 5 a2.3 2.3 0 0 0 -3 -3 L10.5 6z" fill="#dcdcdc"/></svg>
<div class="ctri" style="left:28px;top:586px"></div>
<svg class="a" style="left:9px;top:592px" width="22" height="22"><path d="M5 21 C2 17 1 12 2 9 L4 9 L6 13 L6 4 a1.5 1.5 0 0 1 3 0 L9 10 L9 2 a1.5 1.5 0 0 1 3 0 L12 10 L12 3 a1.5 1.5 0 0 1 3 0 L15 11 L15 6 a1.5 1.5 0 0 1 3 0 L18 15 C18 19 16 21 14 21 Z" fill="#d8d8d8"/></svg>
<svg class="a" style="left:10px;top:617px" width="21" height="21"><circle cx="8" cy="8" r="6.2" fill="#666" stroke="#ddd" stroke-width="2"/><path d="M12.5 12.5 L19 19" stroke="#ddd" stroke-width="3"/></svg>
<div class="a" style="left:4px;top:641px;width:32px;height:1px;background:#3d3d3d"></div>
<svg class="a" style="left:6px;top:644px" width="28" height="46"><rect x="2" y="2" width="12" height="13" fill="none" stroke="#aaa" stroke-width="1.3" stroke-dasharray="3 1"/><text x="4" y="13" font-family="Liberation Sans" font-size="12" font-weight="bold" fill="#ddd">?</text><rect x="11" y="11" width="13" height="13" fill="#fff"/><rect x="14" y="14" width="7" height="7" fill="#777"/><path d="M11 24 L24 11" stroke="#e0201c" stroke-width="2.5"/><path d="M18 2 a5 5 0 0 1 5 5" stroke="#ddd" fill="none"/><path d="M1 27h8v8H1z" fill="#fff"/><path d="M1 35 L9 27" stroke="#e0201c" stroke-width="2"/><rect x="5" y="31" width="7" height="7" fill="#111" stroke="#ddd"/></svg>
<svg class="a" style="left:6px;top:688px" width="30" height="16"><rect x="1" y="2" width="11" height="11" fill="none" stroke="#ddd" stroke-width="1.4"/><text x="16" y="13" font-family="Liberation Serif" font-size="15" fill="#888">T</text></svg>
<div class="a" style="left:4px;top:706px;width:32px;height:1px;background:#3d3d3d"></div>
<div class="a" style="left:6px;top:711px;width:28px;height:24px;background:#363636;border-radius:2px"></div>
<div class="a" style="left:12px;top:715px;width:16px;height:15px;background:#5ab5d0"></div>
<div class="ctri" style="left:28px;top:731px"></div>
<div class="a" style="left:4px;top:740px;width:32px;height:1px;background:#3d3d3d"></div>
<div class="a" style="left:6px;top:744px;width:28px;height:24px;background:#363636;border-radius:2px"></div>
<svg class="a" style="left:12px;top:748px" width="17" height="16"><rect x="1" y="1" width="15" height="14" fill="#555" stroke="#ddd" stroke-width="1.6"/><rect x="3.5" y="3.5" width="10" height="3" fill="#ddd"/><path d="M3.5 9h4.5M8 11.5h5.5" stroke="#ddd" stroke-width="1.6"/></svg>
<div class="ctri" style="left:28px;top:764px"></div>
<!-- TAB BAR -->
<div class="a" style="left:41px;top:100px;width:1631px;height:24px;background:#2e2e2e"></div>
<div class="a" style="left:41px;top:101px;width:179px;height:23px;background:#4a4a4a;border-top:1px solid #555"></div>
<div class="a" style="left:53px;top:106px;font-size:13px;font-weight:bold;color:#e4e4e4;letter-spacing:0px">Infoflyer.indd @ 75 %</div>
<svg class="a" style="left:203px;top:108px" width="9" height="9"><path d="M1 1l7 7M8 1L1 8" stroke="#cfcfcf" stroke-width="1.6"/></svg>
<!-- PASTEBOARD -->
<div class="a" style="left:61px;top:143px;width:1589px;height:871px;background:#646464"></div>
<div class="a" style="left:61px;top:143px;width:1589px;height:17px;background:linear-gradient(#505050 0,#505050 1px,#464646 1px,#3d3d3d);border-bottom:1px solid #242424"></div>
<div class="a" style="left:61px;top:911px;width:1589px;height:37px;background:#3e3e3e;border-top:1px solid #222;border-bottom:1px solid #222"></div>
<svg class="a" style="left:41px;top:124px" width="1611" height="20"><rect width="1611" height="20" fill="#1f1f1f"/><path d="M10.5 0V19.5M67.5 0V19.5M123.5 0V19.5M180.5 0V19.5M237.5 0V19.5M293.5 0V19.5M350.5 0V19.5M407.5 0V19.5M464.5 0V19.5M520.5 0V19.5M577.5 0V19.5M634.5 0V19.5M690.5 0V19.5M747.5 0V19.5M804.5 0V19.5M860.5 0V19.5M917.5 0V19.5M974.5 0V19.5M1030.5 0V19.5M1087.5 0V19.5M1144.5 0V19.5M1201.5 0V19.5M1257.5 0V19.5M1314.5 0V19.5M1371.5 0V19.5M1427.5 0V19.5M1484.5 0V19.5M1541.5 0V19.5M1598.5 0V19.5" stroke="#b8b8b8"/><path d="M38.5 11V19.5M95.5 11V19.5M152.5 11V19.5M208.5 11V19.5M265.5 11V19.5M322.5 11V19.5M378.5 11V19.5M435.5 11V19.5M492.5 11V19.5M549.5 11V19.5M605.5 11V19.5M662.5 11V19.5M719.5 11V19.5M775.5 11V19.5M832.5 11V19.5M889.5 11V19.5M945.5 11V19.5M1002.5 11V19.5M1059.5 11V19.5M1116.5 11V19.5M1172.5 11V19.5M1229.5 11V19.5M1286.5 11V19.5M1342.5 11V19.5M1399.5 11V19.5M1456.5 11V19.5M1512.5 11V19.5M1569.5 11V19.5" stroke="#9a9a9a"/><path d="M4.5 16V19.5M16.5 16V19.5M21.5 16V19.5M27.5 16V19.5M33.5 16V19.5M44.5 16V19.5M50.5 16V19.5M55.5 16V19.5M61.5 16V19.5M72.5 16V19.5M78.5 16V19.5M84.5 16V19.5M89.5 16V19.5M101.5 16V19.5M106.5 16V19.5M112.5 16V19.5M118.5 16V19.5M129.5 16V19.5M135.5 16V19.5M140.5 16V19.5M146.5 16V19.5M157.5 16V19.5M163.5 16V19.5M169.5 16V19.5M174.5 16V19.5M186.5 16V19.5M191.5 16V19.5M197.5 16V19.5M203.5 16V19.5M214.5 16V19.5M220.5 16V19.5M225.5 16V19.5M231.5 16V19.5M242.5 16V19.5M248.5 16V19.5M254.5 16V19.5M259.5 16V19.5M271.5 16V19.5M276.5 16V19.5M282.5 16V19.5M288.5 16V19.5M299.5 16V19.5M305.5 16V19.5M310.5 16V19.5M316.5 16V19.5M327.5 16V19.5M333.5 16V19.5M339.5 16V19.5M344.5 16V19.5M356.5 16V19.5M361.5 16V19.5M367.5 16V19.5M373.5 16V19.5M384.5 16V19.5M390.5 16V19.5M395.5 16V19.5M401.5 16V19.5M412.5 16V19.5M418.5 16V19.5M424.5 16V19.5M429.5 16V19.5M441.5 16V19.5M446.5 16V19.5M452.5 16V19.5M458.5 16V19.5M469.5 16V19.5M475.5 16V19.5M481.5 16V19.5M486.5 16V19.5M498.5 16V19.5M503.5 16V19.5M509.5 16V19.5M515.5 16V19.5M526.5 16V19.5M532.5 16V19.5M537.5 16V19.5M543.5 16V19.5M554.5 16V19.5M560.5 16V19.5M566.5 16V19.5M571.5 16V19.5M583.5 16V19.5M588.5 16V19.5M594.5 16V19.5M600.5 16V19.5M611.5 16V19.5M617.5 16V19.5M622.5 16V19.5M628.5 16V19.5M639.5 16V19.5M645.5 16V19.5M651.5 16V19.5M656.5 16V19.5M668.5 16V19.5M673.5 16V19.5M679.5 16V19.5M685.5 16V19.5M696.5 16V19.5M702.5 16V19.5M707.5 16V19.5M713.5 16V19.5M724.5 16V19.5M730.5 16V19.5M736.5 16V19.5M741.5 16V19.5M753.5 16V19.5M758.5 16V19.5M764.5 16V19.5M770.5 16V19.5M781.5 16V19.5M787.5 16V19.5M792.5 16V19.5M798.5 16V19.5M809.5 16V19.5M815.5 16V19.5M821.5 16V19.5M826.5 16V19.5M838.5 16V19.5M843.5 16V19.5M849.5 16V19.5M855.5 16V19.5M866.5 16V19.5M872.5 16V19.5M877.5 16V19.5M883.5 16V19.5M894.5 16V19.5M900.5 16V19.5M906.5 16V19.5M911.5 16V19.5M923.5 16V19.5M928.5 16V19.5M934.5 16V19.5M940.5 16V19.5M951.5 16V19.5M957.5 16V19.5M962.5 16V19.5M968.5 16V19.5M979.5 16V19.5M985.5 16V19.5M991.5 16V19.5M996.5 16V19.5M1008.5 16V19.5M1013.5 16V19.5M1019.5 16V19.5M1025.5 16V19.5M1036.5 16V19.5M1042.5 16V19.5M1048.5 16V19.5M1053.5 16V19.5M1065.5 16V19.5M1070.5 16V19.5M1076.5 16V19.5M1082.5 16V19.5M1093.5 16V19.5M1099.5 16V19.5M1104.5 16V19.5M1110.5 16V19.5M1121.5 16V19.5M1127.5 16V19.5M1133.5 16V19.5M1138.5 16V19.5M1150.5 16V19.5M1155.5 16V19.5M1161.5 16V19.5M1167.5 16V19.5M1178.5 16V19.5M1184.5 16V19.5M1189.5 16V19.5M1195.5 16V19.5M1206.5 16V19.5M1212.5 16V19.5M1218.5 16V19.5M1223.5 16V19.5M1235.5 16V19.5M1240.5 16V19.5M1246.5 16V19.5M1252.5 16V19.5M1263.5 16V19.5M1269.5 16V19.5M1274.5 16V19.5M1280.5 16V19.5M1291.5 16V19.5M1297.5 16V19.5M1303.5 16V19.5M1308.5 16V19.5M1320.5 16V19.5M1325.5 16V19.5M1331.5 16V19.5M1337.5 16V19.5M1348.5 16V19.5M1354.5 16V19.5M1359.5 16V19.5M1365.5 16V19.5M1376.5 16V19.5M1382.5 16V19.5M1388.5 16V19.5M1393.5 16V19.5M1405.5 16V19.5M1410.5 16V19.5M1416.5 16V19.5M1422.5 16V19.5M1433.5 16V19.5M1439.5 16V19.5M1444.5 16V19.5M1450.5 16V19.5M1461.5 16V19.5M1467.5 16V19.5M1473.5 16V19.5M1478.5 16V19.5M1490.5 16V19.5M1495.5 16V19.5M1501.5 16V19.5M1507.5 16V19.5M1518.5 16V19.5M1524.5 16V19.5M1529.5 16V19.5M1535.5 16V19.5M1546.5 16V19.5M1552.5 16V19.5M1558.5 16V19.5M1563.5 16V19.5M1575.5 16V19.5M1580.5 16V19.5M1586.5 16V19.5M1592.5 16V19.5M1603.5 16V19.5M1609.5 16V19.5" stroke="#6a6a6a"/><text x="13" y="12" font-family="Liberation Sans" font-size="10" fill="#cacaca">20</text><text x="70" y="12" font-family="Liberation Sans" font-size="10" fill="#cacaca">0</text><text x="126" y="12" font-family="Liberation Sans" font-size="10" fill="#cacaca">20</text><text x="183" y="12" font-family="Liberation Sans" font-size="10" fill="#cacaca">40</text><text x="240" y="12" font-family="Liberation Sans" font-size="10" fill="#cacaca">60</text><text x="296" y="12" font-family="Liberation Sans" font-size="10" fill="#cacaca">80</text><text x="353" y="12" font-family="Liberation Sans" font-size="10" fill="#cacaca">100</text><text x="410" y="12" font-family="Liberation Sans" font-size="10" fill="#cacaca">120</text><text x="467" y="12" font-family="Liberation Sans" font-size="10" fill="#cacaca">140</text><text x="523" y="12" font-family="Liberation Sans" font-size="10" fill="#cacaca">160</text><text x="580" y="12" font-family="Liberation Sans" font-size="10" fill="#cacaca">180</text><text x="637" y="12" font-family="Liberation Sans" font-size="10" fill="#cacaca">200</text><text x="693" y="12" font-family="Liberation Sans" font-size="10" fill="#cacaca">220</text><text x="750" y="12" font-family="Liberation Sans" font-size="10" fill="#cacaca">240</text><text x="807" y="12" font-family="Liberation Sans" font-size="10" fill="#cacaca">260</text><text x="863" y="12" font-family="Liberation Sans" font-size="10" fill="#cacaca">280</text><text x="920" y="12" font-family="Liberation Sans" font-size="10" fill="#cacaca">300</text><text x="977" y="12" font-family="Liberation Sans" font-size="10" fill="#cacaca">320</text><text x="1033" y="12" font-family="Liberation Sans" font-size="10" fill="#cacaca">340</text><text x="1090" y="12" font-family="Liberation Sans" font-size="10" fill="#cacaca">360</text><text x="1147" y="12" font-family="Liberation Sans" font-size="10" fill="#cacaca">380</text><text x="1204" y="12" font-family="Liberation Sans" font-size="10" fill="#cacaca">400</text><text x="1260" y="12" font-family="Liberation Sans" font-size="10" fill="#cacaca">420</text><text x="1317" y="12" font-family="Liberation Sans" font-size="10" fill="#cacaca">440</text><text x="1374" y="12" font-family="Liberation Sans" font-size="10" fill="#cacaca">460</text><text x="1430" y="12" font-family="Liberation Sans" font-size="10" fill="#cacaca">480</text><text x="1487" y="12" font-family="Liberation Sans" font-size="10" fill="#cacaca">500</text><text x="1544" y="12" font-family="Liberation Sans" font-size="10" fill="#cacaca">520</text><text x="1601" y="12" font-family="Liberation Sans" font-size="10" fill="#cacaca">540</text></svg><svg class="a" style="left:41px;top:143px" width="20" height="871"><rect width="20" height="871" fill="#1f1f1f"/><path d="M0 39.5H19.5M0 95.5H19.5M0 152.5H19.5M0 208.5H19.5M0 265.5H19.5M0 322.5H19.5M0 378.5H19.5M0 435.5H19.5M0 492.5H19.5M0 548.5H19.5M0 605.5H19.5M0 662.5H19.5M0 718.5H19.5M0 825.5H19.5" stroke="#b8b8b8"/><path d="M11 10.5H19.5M11 67.5H19.5M11 124.5H19.5M11 180.5H19.5M11 237.5H19.5M11 293.5H19.5M11 350.5H19.5M11 407.5H19.5M11 463.5H19.5M11 520.5H19.5M11 577.5H19.5M11 633.5H19.5M11 690.5H19.5M11 747.5H19.5M11 853.5H19.5" stroke="#9a9a9a"/><path d="M16 5.5H19.5M16 16.5H19.5M16 22.5H19.5M16 27.5H19.5M16 33.5H19.5M16 44.5H19.5M16 50.5H19.5M16 56.5H19.5M16 61.5H19.5M16 73.5H19.5M16 78.5H19.5M16 84.5H19.5M16 90.5H19.5M16 101.5H19.5M16 107.5H19.5M16 112.5H19.5M16 118.5H19.5M16 129.5H19.5M16 135.5H19.5M16 141.5H19.5M16 146.5H19.5M16 158.5H19.5M16 163.5H19.5M16 169.5H19.5M16 174.5H19.5M16 186.5H19.5M16 191.5H19.5M16 197.5H19.5M16 203.5H19.5M16 214.5H19.5M16 220.5H19.5M16 225.5H19.5M16 231.5H19.5M16 242.5H19.5M16 248.5H19.5M16 254.5H19.5M16 259.5H19.5M16 271.5H19.5M16 276.5H19.5M16 282.5H19.5M16 288.5H19.5M16 299.5H19.5M16 305.5H19.5M16 310.5H19.5M16 316.5H19.5M16 327.5H19.5M16 333.5H19.5M16 339.5H19.5M16 344.5H19.5M16 356.5H19.5M16 361.5H19.5M16 367.5H19.5M16 373.5H19.5M16 384.5H19.5M16 390.5H19.5M16 395.5H19.5M16 401.5H19.5M16 412.5H19.5M16 418.5H19.5M16 424.5H19.5M16 429.5H19.5M16 441.5H19.5M16 446.5H19.5M16 452.5H19.5M16 458.5H19.5M16 469.5H19.5M16 475.5H19.5M16 480.5H19.5M16 486.5H19.5M16 497.5H19.5M16 503.5H19.5M16 509.5H19.5M16 514.5H19.5M16 526.5H19.5M16 531.5H19.5M16 537.5H19.5M16 543.5H19.5M16 554.5H19.5M16 560.5H19.5M16 565.5H19.5M16 571.5H19.5M16 582.5H19.5M16 588.5H19.5M16 594.5H19.5M16 599.5H19.5M16 611.5H19.5M16 616.5H19.5M16 622.5H19.5M16 628.5H19.5M16 639.5H19.5M16 645.5H19.5M16 650.5H19.5M16 656.5H19.5M16 667.5H19.5M16 673.5H19.5M16 679.5H19.5M16 684.5H19.5M16 696.5H19.5M16 701.5H19.5M16 707.5H19.5M16 713.5H19.5M16 724.5H19.5M16 730.5H19.5M16 735.5H19.5M16 741.5H19.5M16 752.5H19.5M16 758.5H19.5M16 764.5H19.5M16 808.5H19.5M16 814.5H19.5M16 819.5H19.5M16 831.5H19.5M16 836.5H19.5M16 842.5H19.5M16 848.5H19.5M16 859.5H19.5M16 865.5H19.5M16 870.5H19.5" stroke="#6a6a6a"/><text x="4" y="50" font-family="Liberation Sans" font-size="10" fill="#cacaca">2</text><text x="4" y="59" font-family="Liberation Sans" font-size="10" fill="#cacaca">0</text><text x="4" y="106" font-family="Liberation Sans" font-size="10" fill="#cacaca">0</text><text x="4" y="163" font-family="Liberation Sans" font-size="10" fill="#cacaca">2</text><text x="4" y="172" font-family="Liberation Sans" font-size="10" fill="#cacaca">0</text><text x="4" y="219" font-family="Liberation Sans" font-size="10" fill="#cacaca">4</text><text x="4" y="228" font-family="Liberation Sans" font-size="10" fill="#cacaca">0</text><text x="4" y="276" font-family="Liberation Sans" font-size="10" fill="#cacaca">6</text><text x="4" y="285" font-family="Liberation Sans" font-size="10" fill="#cacaca">0</text><text x="4" y="333" font-family="Liberation Sans" font-size="10" fill="#cacaca">8</text><text x="4" y="342" font-family="Liberation Sans" font-size="10" fill="#cacaca">0</text><text x="4" y="389" font-family="Liberation Sans" font-size="10" fill="#cacaca">1</text><text x="4" y="398" font-family="Liberation Sans" font-size="10" fill="#cacaca">0</text><text x="4" y="407" font-family="Liberation Sans" font-size="10" fill="#cacaca">0</text><text x="4" y="446" font-family="Liberation Sans" font-size="10" fill="#cacaca">1</text><text x="4" y="455" font-family="Liberation Sans" font-size="10" fill="#cacaca">2</text><text x="4" y="464" font-family="Liberation Sans" font-size="10" fill="#cacaca">0</text><text x="4" y="503" font-family="Liberation Sans" font-size="10" fill="#cacaca">1</text><text x="4" y="512" font-family="Liberation Sans" font-size="10" fill="#cacaca">4</text><text x="4" y="521" font-family="Liberation Sans" font-size="10" fill="#cacaca">0</text><text x="4" y="559" font-family="Liberation Sans" font-size="10" fill="#cacaca">1</text><text x="4" y="568" font-family="Liberation Sans" font-size="10" fill="#cacaca">6</text><text x="4" y="577" font-family="Liberation Sans" font-size="10" fill="#cacaca">0</text><text x="4" y="616" font-family="Liberation Sans" font-size="10" fill="#cacaca">1</text><text x="4" y="625" font-family="Liberation Sans" font-size="10" fill="#cacaca">8</text><text x="4" y="634" font-family="Liberation Sans" font-size="10" fill="#cacaca">0</text><text x="4" y="673" font-family="Liberation Sans" font-size="10" fill="#cacaca">2</text><text x="4" y="682" font-family="Liberation Sans" font-size="10" fill="#cacaca">0</text><text x="4" y="691" font-family="Liberation Sans" font-size="10" fill="#cacaca">0</text><text x="4" y="729" font-family="Liberation Sans" font-size="10" fill="#cacaca">2</text><text x="4" y="738" font-family="Liberation Sans" font-size="10" fill="#cacaca">2</text><text x="4" y="747" font-family="Liberation Sans" font-size="10" fill="#cacaca">0</text><text x="4" y="836" font-family="Liberation Sans" font-size="10" fill="#cacaca">2</text><text x="4" y="845" font-family="Liberation Sans" font-size="10" fill="#cacaca">0</text></svg><div class="a" style="left:41px;top:143px;width:20px;height:17px;background:#555"></div>
<div class="a" style="left:41px;top:911px;width:20px;height:37px;background:#555;border-top:1px solid #777;border-bottom:1px solid #777"></div>
<div class="a" style="left:41px;top:124px;width:20px;height:19px;background:#1f1f1f;border-right:1px solid #888"></div>
<!-- VSCROLL -->
<div class="a" style="left:1650px;top:124px;width:22px;height:890px;background:#383838;border-left:1px solid #2e2e2e"></div>
<div class="a" style="left:1652px;top:162px;width:17px;height:450px;background:#9b9b9b"></div>
<div class="a" style="left:1654px;top:130px;width:0;height:0;border-style:solid;border-width:0 6px 8px 6px;border-color:transparent transparent #e0e0e0"></div>
<div class="a" style="left:1655px;top:1000px;width:0;height:0;border-style:solid;border-width:6px 5px 0 5px;border-color:#e0e0e0 transparent transparent"></div>
<!-- STATUS BAR -->
<div class="a" style="left:41px;top:1014px;width:1631px;height:16px;background:#4a4a4a"></div>
<div class="a" style="left:62px;top:1016px;width:23px;height:14px;background:#aaa;border-radius:2px"></div>
<svg class="a" style="left:63px;top:1017px" width="22" height="13"><circle cx="6" cy="6.5" r="3.5" fill="none" stroke="#444" stroke-width="2.5" stroke-dasharray="2 1"/><rect x="14" y="2" width="2.5" height="6" fill="#444"/><rect x="14" y="10" width="2.5" height="2.5" fill="#444"/></svg>
<svg class="a" style="left:95px;top:1016px" width="16" height="14"><path d="M1 4v9h11v-4" stroke="#ccc" stroke-width="1.4" fill="none"/><path d="M4 10 C5 6 8 5 12 5 V2 L15 6 L12 9 V7 C9 7 7 8 4 10z" fill="#ddd"/></svg>
<svg class="a" style="left:121px;top:1018px" width="30" height="10"><path d="M1 1v8M9 1L3 5l6 4z" fill="#888" stroke="#888"/><path d="M27 1l-6 4 6 4z" fill="#888"/></svg>
<div class="a" style="left:158px;top:1018px;font-size:10.5px;color:#ccc">1</div>
<div class="a" style="left:257px;top:1019px;width:0;height:0;border-style:solid;border-width:6px 4px 0 4px;border-color:#ddd transparent transparent"></div>
<svg class="a" style="left:278px;top:1017px" width="28" height="11"><path d="M1 1l6 4.5-6 4.5z" fill="#ddd"/><path d="M17 1l6 4.5-6 4.5z M24 1v9" fill="#ddd" stroke="#ddd" stroke-width="1.5"/></svg>
<svg class="a" style="left:313px;top:1015px" width="18" height="15"><circle cx="8" cy="8" r="6" fill="none" stroke="#ddd" stroke-width="1.8"/><path d="M8 4v4h3" stroke="#ddd" stroke-width="1.5" fill="none"/><rect x="6" y="7" width="6" height="8" fill="#ddd"/><path d="M14 13h3" stroke="#ddd"/></svg>
<div class="a" style="left:344px;top:1018px;font-size:10.5px;color:#c0c0c0;white-space:nowrap">[Grundprofil] (Arbeitsp...</div>
<div class="a" style="left:471px;top:1020px;width:0;height:0;border-style:solid;border-width:6px 4px 0 4px;border-color:#ddd transparent transparent"></div>
<div class="a" style="left:488px;top:1017px;width:12px;height:12px;border-radius:50%;background:#3fae2a"></div>
<div class="a" style="left:505px;top:1018px;font-size:10.5px;color:#c0c0c0;white-space:nowrap">Ohne Fehler</div>
<div class="a" style="left:590px;top:1021px;width:0;height:0;border-style:solid;border-width:4px 3px 0 3px;border-color:#ccc transparent transparent"></div>
<div class="a" style="left:603px;top:1014px;width:1029px;height:16px;background:#323232"></div>
<div class="a" style="left:609px;top:1017px;width:0;height:0;border-style:solid;border-width:5px 7px 5px 0;border-color:transparent #ddd transparent transparent"></div>
<div class="a" style="left:940px;top:1014px;width:409px;height:16px;background:#9a9a9a"></div>
<div class="a" style="left:1609px;top:1017px;width:0;height:0;border-style:solid;border-width:5px 0 5px 7px;border-color:transparent transparent transparent #ddd"></div>
<div class="a" style="left:1624px;top:1014px;width:26px;height:16px;background:#4a4a4a"></div>
<svg class="a" style="left:1630px;top:1015px" width="18" height="14"><rect x="1" y="1" width="16" height="13" fill="#333" stroke="#ccc" stroke-width="1.3"/><path d="M9 1v13" stroke="#ccc" stroke-width="1.3"/></svg>
<div class="a" style="left:1650px;top:1014px;width:22px;height:16px;background:#3a3a3a"></div>
<div class="a" style="left:1656px;top:1018px;width:12px;height:12px;background:repeating-linear-gradient(135deg,transparent 0 2px,#666 2px 3px)"></div>
<!-- SPREAD -->
<div class="a" style="left:102px;top:232px;width:1265px;height:608px;background:#e47f22;box-shadow:0 0 0 1px rgba(150,90,80,.5)"></div>
<div class="a" style="left:107px;top:237px;width:1254px;height:597px;background:#a1a89d;border:1px solid #1e1e1e"></div>
<div class="a" style="left:116px;top:246px;width:1236px;height:579px;background:#fff;border:1px solid #a484d8;border-top-color:#c08ccc;border-bottom-color:#d078dc"></div>
<!-- top stripes -->
<div class="a" style="left:102px;top:232px;width:840px;height:23px;background:#2972a9"></div>
<div class="a" style="left:102px;top:255px;width:840px;height:17px;background:#3e84a7;border-top:1px solid #4e93d6"></div>
<div class="a" style="left:102px;top:272px;width:840px;height:16px;background:#2995b2;border-top:1px solid #3f9bd0"></div>
<div class="a" style="left:102px;top:288px;width:840px;height:18px;background:#56b3c9"></div>
<div class="a" style="left:107px;top:237px;width:835px;height:1px;background:#10243a"></div>
<div class="a" style="left:107px;top:237px;width:1px;height:69px;background:#10243a"></div>
<div class="a" style="left:116px;top:246px;width:826px;height:1px;background:#8b72d8"></div>
<div class="a" style="left:116px;top:246px;width:1px;height:60px;background:#7a6ad0"></div>
<!-- fold lines -->
<div class="a" style="left:521px;top:306px;width:1px;height:403px;background:repeating-linear-gradient(#8c8c8c 0 4px,transparent 4px 8px)"></div>
<div class="a" style="left:941px;top:306px;width:1px;height:403px;background:repeating-linear-gradient(#8c8c8c 0 4px,transparent 4px 8px)"></div>
<!-- circles -->
<svg class="a" style="left:230px;top:440px" width="1010" height="250">
 <g fill="none">
  <circle cx="86.8" cy="86.6" r="74" stroke="#d9a47c" stroke-width="6.5"/>
  <circle cx="86.8" cy="86.6" r="74" stroke="#a8a399" stroke-width="4.5"/>
  <circle cx="504.2" cy="86.2" r="74" stroke="#d9a47c" stroke-width="6.5"/>
  <circle cx="504.2" cy="86.2" r="74" stroke="#a8a399" stroke-width="4.5"/>
  <circle cx="922.2" cy="86.4" r="74" stroke="#d9a47c" stroke-width="6.5"/>
  <circle cx="922.2" cy="86.4" r="74" stroke="#a8a399" stroke-width="4.5"/>
 </g>
 <g fill="#9fa49c" stroke="#d9a070" stroke-width="0.9" transform="translate(-230,-440)">
  <path d="M295.5 487.2 H336.8 V496.4 H306.2 V514.9 C309.5 513.8 314 513.4 318.8 513.4 C331 513.4 340.2 524 340.2 541 C340.2 558 329 569.7 313 569.7 C304.5 569.7 298 567 294 563.4 L298.4 554.7 C302 557.5 307 560.5 313 560.5 C322 560.5 328 553 328 541 C328 530 321 522.7 312 522.7 C306 522.7 302 525.5 299.4 528.5 L295.5 528 Z"/>
  <path fill-rule="evenodd" d="M742.6 486.3 L747.4 491.1 C739 496 731 505 726 515.5 C729 516.5 733 517.3 736.7 517.3 C750 517.3 759.6 528 759.6 544 C759.6 559 749 570.2 733.8 570.2 C718 570.2 709 557 709 541 C709 520 720 500 742.6 486.3 Z M735 526.5 C726.5 526.5 720.7 534 720.7 544 C720.7 554 726.5 561.5 735 561.5 C743.5 561.5 749.4 554 749.4 544 C749.4 534 743.5 526.5 735 526.5 Z"/>
  <path d="M1158.6 487.2 H1161.5 V568.8 H1149.4 V507.5 L1133.4 516.3 V505.2 C1142 500.5 1152 494 1158.6 487.2 Z"/>
 </g>
</svg>
<div class="a" style="left:664px;top:639px;font-size:28.5px;font-weight:bold;color:#333;white-space:nowrap;letter-spacing:0.15px;-webkit-text-stroke:0.4px #fff" id="rs">Rückseite</div>
<div class="a" style="left:1071px;top:639px;font-size:28.5px;font-weight:bold;color:#333;white-space:nowrap;letter-spacing:0.9px;-webkit-text-stroke:0.4px #fff" id="vs">Vorderseite</div>
<!-- right page dimension lines -->
<div class="a" style="left:941px;top:793px;width:421px;height:1px;background:#8a8a8a"></div>
<div class="a" style="left:941px;top:807px;width:426px;height:1px;background:#8a8a8a"></div>
<div class="a" style="left:941px;top:822px;width:421px;height:1px;background:#8a8a8a"></div>
<div class="a" style="left:1335px;top:232px;width:1px;height:608px;background:#3a3a3a"></div>
<div class="a" style="left:1349px;top:238px;width:1px;height:595px;background:#8a8a9a"></div><div class="a" style="left:1350px;top:246px;width:2px;height:578px;background:#e4dcf6"></div><div class="a" style="left:1352px;top:246px;width:1px;height:579px;background:#9484c4"></div>
<div class="a" style="left:1331px;top:232px;width:9px;height:1px;background:#6a3a10"></div>
<div class="a" style="left:1331px;top:839px;width:9px;height:1px;background:#6a3a10"></div>
<div class="a" style="left:1344px;top:238px;width:11px;height:2px;background:#7a3a10;border-radius:50%"></div>
<div class="a" style="left:1344px;top:832px;width:11px;height:2px;background:#7a3a10;border-radius:50%"></div>
<div class="a" style="left:1135px;top:782px;font-size:9px;font-weight:bold;color:#c5570e;white-space:nowrap;letter-spacing:-0.3px">148 mm</div>
<div class="a" style="left:1312px;top:531px;font-size:9px;font-weight:bold;color:#c5570e;white-space:nowrap;transform:rotate(-90deg);letter-spacing:-0.6px;width:34px;text-align:center">214 mm</div>
<div class="a" style="left:1326px;top:531px;font-size:9px;font-weight:bold;color:#c5570e;white-space:nowrap;transform:rotate(-90deg);letter-spacing:-0.3px;width:34px;text-align:center">210 mm</div>
<!-- bottom stripes -->
<div class="a" style="left:102px;top:709px;width:840px;height:31px;background:#56b3c9"></div>
<div class="a" style="left:102px;top:740px;width:840px;height:31px;background:#2995b2;border-top:1px solid #45a0d8"></div>
<div class="a" style="left:102px;top:771px;width:840px;height:31px;background:#3e84a7;border-top:1px solid #4a92d8"></div>
<div class="a" style="left:102px;top:802px;width:840px;height:37px;background:#2972a9;border-top:1px solid #4a8ee0"></div>
<div class="a" style="left:107px;top:709px;width:1px;height:125px;background:#10243a"></div>
<div class="a" style="left:107px;top:833px;width:835px;height:1px;background:#10243a"></div>
<div class="a" style="left:117px;top:709px;width:1px;height:116px;background:#7a6ad0"></div>
<div class="a" style="left:117px;top:824px;width:825px;height:1px;background:#8b72d8"></div>
<div class="a" style="left:102px;top:708px;width:840px;height:132px;border:1px dashed #f0f0f0"></div>
<div class="hd" style="left:99px;top:705px"></div>
<div class="hd" style="left:517px;top:705px"></div>
<div class="hd" style="left:937px;top:705px"></div>
<div class="hd" style="left:99px;top:770px"></div>
<div class="hd" style="left:937px;top:770px"></div>
<div class="hd" style="left:99px;top:835px"></div>
<div class="hd" style="left:517px;top:835px"></div>
<div class="hd" style="left:937px;top:835px"></div>
<div class="a" style="left:771px;top:704px;width:7px;height:6px;background:#4a90e8"></div>
<div class="a" style="left:567px;top:709px;font-size:31.5px;font-weight:bold;color:#f5101a;line-height:31.3px;white-space:nowrap;letter-spacing:0.35px" id="cmyk">C=70 M=0 Y=20 K=0<br>C=80 M=10 Y=20 K=10<br>C=80 M=30 Y=20 K=5<br>C=85 M=35 Y=10 K=15</div>
<!-- PANEL -->
<div class="a" style="left:1669px;top:100px;width:251px;height:930px;background:#333"></div>
<div class="a" style="left:1672px;top:100px;width:248px;height:15px;background:#2e2e2e"></div>
<svg class="a" style="left:1904px;top:104px" width="12" height="8"><path d="M0 0l4 4-4 4zM6 0l4 4-4 4z" fill="#d0d0d0"/></svg>
<div class="a" style="left:1672px;top:115px;width:248px;height:22px;background:#393939"></div>
<div class="a" style="left:1672px;top:115px;width:63px;height:22px;background:#4a4a4a;border-top:1px solid #555"></div>
<div class="tab" style="left:1677px;top:119px"><span class="ud"></span></div>
<div class="tabt act" style="left:1688px;top:119px">Ebenen</div>
<div class="tabt" style="left:1744px;top:119px">Seiten</div>
<div class="tabt" style="left:1788px;top:119px;width:85px;overflow:hidden;white-space:nowrap">Verknüpfungen</div>
<div class="menuic" style="left:1897px;top:122px"></div>
<div class="a" style="left:1672px;top:137px;width:248px;height:366px;background:#4a4a4a"></div>
<div class="a" style="left:1904px;top:137px;width:16px;height:366px;background:#3c3c3c"></div>
<div class="a" style="left:1908px;top:142px;width:0;height:0;border-style:solid;border-width:0 5px 6px 5px;border-color:transparent transparent #777"></div>
<div class="a" style="left:1908px;top:489px;width:0;height:0;border-style:solid;border-width:6px 5px 0 5px;border-color:#777 transparent transparent"></div>
<div class="a" style="left:1672px;top:159px;width:232px;height:1px;background:#393939"></div>
<div class="a" style="left:1695px;top:137px;width:1px;height:22px;background:#404040"></div>
<svg class="a" style="left:1673px;top:142px" width="19" height="13"><path d="M1.2 6.5 C4.5 1.2 14.5 1.2 17.8 6.5 C14.5 11.8 4.5 11.8 1.2 6.5Z" fill="#4a4a4a" stroke="#d2d2d2" stroke-width="1.7"/><circle cx="9.5" cy="6.5" r="3.6" fill="#1c1c1c"/><circle cx="10.8" cy="5" r="1.2" fill="#e0e0e0"/></svg>
<div class="a" style="left:1717px;top:139px;width:5px;height:19px;background:#4f95ec"></div>
<div class="a" style="left:1726px;top:145px;width:0;height:0;border-style:solid;border-width:6px 5px 0 5px;border-color:#dcdcdc transparent transparent"></div>
<div class="lt" style="left:1739px;top:146px;">Meine Ebene</div>
<div class="a" style="left:1888px;top:143px;width:11px;height:11px;background:#4f9ef2;border:2px solid #1a1a1a"></div>
<svg class="a" style="left:1862px;top:140px" width="17" height="17"><path d="M1 16 L3 9 L10 3 L14 7 L8 14 Z" fill="#d8d8d8"/><path d="M1 16 L6 11" stroke="#4a4a4a" stroke-width="1.2"/><circle cx="6.5" cy="10.5" r="1.3" fill="#4a4a4a"/><path d="M11 2 l2-1.5 3.5 3.5 -1.5 2z" fill="#d8d8d8"/></svg>
<div class="a" style="left:1672px;top:182px;width:232px;height:1px;background:#393939"></div>
<div class="a" style="left:1695px;top:160px;width:1px;height:22px;background:#404040"></div>
<svg class="a" style="left:1673px;top:165px" width="19" height="13"><path d="M1.2 6.5 C4.5 1.2 14.5 1.2 17.8 6.5 C14.5 11.8 4.5 11.8 1.2 6.5Z" fill="#4a4a4a" stroke="#d2d2d2" stroke-width="1.7"/><circle cx="9.5" cy="6.5" r="3.6" fill="#1c1c1c"/><circle cx="10.8" cy="5" r="1.2" fill="#e0e0e0"/></svg>
<div class="a" style="left:1717px;top:162px;width:5px;height:19px;background:#4f95ec"></div>
<div class="a" style="left:1741px;top:166px;width:0;height:0;border-style:solid;border-width:5px 0 5px 6px;border-color:transparent transparent transparent #dcdcdc"></div>
<div class="lt" style="left:1752px;top:169px;">Streifen oben</div>
<div class="a" style="left:1888px;top:166px;width:11px;height:11px;border:1px solid #2c2c2c"></div>
<div class="a" style="left:1672px;top:205px;width:232px;height:1px;background:#393939"></div>
<div class="a" style="left:1695px;top:183px;width:1px;height:22px;background:#404040"></div>
<div class="a" style="left:1722px;top:183px;width:180px;height:22px;background:#4e5868"></div>
<svg class="a" style="left:1673px;top:188px" width="19" height="13"><path d="M1.2 6.5 C4.5 1.2 14.5 1.2 17.8 6.5 C14.5 11.8 4.5 11.8 1.2 6.5Z" fill="#4a4a4a" stroke="#d2d2d2" stroke-width="1.7"/><circle cx="9.5" cy="6.5" r="3.6" fill="#1c1c1c"/><circle cx="10.8" cy="5" r="1.2" fill="#e0e0e0"/></svg>
<div class="a" style="left:1717px;top:185px;width:5px;height:19px;background:#4f95ec"></div>
<div class="a" style="left:1737px;top:191px;width:0;height:0;border-style:solid;border-width:6px 5px 0 5px;border-color:#dcdcdc transparent transparent"></div>
<div class="lt" style="left:1752px;top:192px;font-weight:bold;color:#f2f2f2;font-size:11.3px;">Streifen unten</div>
<div class="a" style="left:1888px;top:189px;width:11px;height:11px;background:#4f9ef2;border:2px solid #1a1a1a"></div>
<div class="a" style="left:1672px;top:228px;width:232px;height:1px;background:#393939"></div>
<div class="a" style="left:1695px;top:206px;width:1px;height:22px;background:#404040"></div>
<svg class="a" style="left:1673px;top:211px" width="19" height="13"><path d="M1.2 6.5 C4.5 1.2 14.5 1.2 17.8 6.5 C14.5 11.8 4.5 11.8 1.2 6.5Z" fill="#4a4a4a" stroke="#d2d2d2" stroke-width="1.7"/><circle cx="9.5" cy="6.5" r="3.6" fill="#1c1c1c"/><circle cx="10.8" cy="5" r="1.2" fill="#e0e0e0"/></svg>
<div class="a" style="left:1717px;top:208px;width:5px;height:19px;background:#4f95ec"></div>
<div class="lt" style="left:1764px;top:215px;">1</div>
<div class="a" style="left:1888px;top:212px;width:11px;height:11px;border:1px solid #2c2c2c"></div>
<div class="a" style="left:1672px;top:251px;width:232px;height:1px;background:#393939"></div>
<div class="a" style="left:1695px;top:229px;width:1px;height:22px;background:#404040"></div>
<svg class="a" style="left:1673px;top:234px" width="19" height="13"><path d="M1.2 6.5 C4.5 1.2 14.5 1.2 17.8 6.5 C14.5 11.8 4.5 11.8 1.2 6.5Z" fill="#4a4a4a" stroke="#d2d2d2" stroke-width="1.7"/><circle cx="9.5" cy="6.5" r="3.6" fill="#1c1c1c"/><circle cx="10.8" cy="5" r="1.2" fill="#e0e0e0"/></svg>
<div class="a" style="left:1717px;top:231px;width:5px;height:19px;background:#4f95ec"></div>
<div class="lt" style="left:1764px;top:238px;">2</div>
<div class="a" style="left:1888px;top:235px;width:11px;height:11px;border:1px solid #2c2c2c"></div>
<div class="a" style="left:1672px;top:274px;width:232px;height:1px;background:#393939"></div>
<div class="a" style="left:1695px;top:252px;width:1px;height:22px;background:#404040"></div>
<svg class="a" style="left:1673px;top:257px" width="19" height="13"><path d="M1.2 6.5 C4.5 1.2 14.5 1.2 17.8 6.5 C14.5 11.8 4.5 11.8 1.2 6.5Z" fill="#4a4a4a" stroke="#d2d2d2" stroke-width="1.7"/><circle cx="9.5" cy="6.5" r="3.6" fill="#1c1c1c"/><circle cx="10.8" cy="5" r="1.2" fill="#e0e0e0"/></svg>
<div class="a" style="left:1717px;top:254px;width:5px;height:19px;background:#4f95ec"></div>
<div class="lt" style="left:1764px;top:261px;">3</div>
<div class="a" style="left:1888px;top:258px;width:11px;height:11px;border:1px solid #2c2c2c"></div>
<div class="a" style="left:1672px;top:297px;width:232px;height:1px;background:#393939"></div>
<div class="a" style="left:1695px;top:275px;width:1px;height:22px;background:#404040"></div>
<svg class="a" style="left:1673px;top:280px" width="19" height="13"><path d="M1.2 6.5 C4.5 1.2 14.5 1.2 17.8 6.5 C14.5 11.8 4.5 11.8 1.2 6.5Z" fill="#4a4a4a" stroke="#d2d2d2" stroke-width="1.7"/><circle cx="9.5" cy="6.5" r="3.6" fill="#1c1c1c"/><circle cx="10.8" cy="5" r="1.2" fill="#e0e0e0"/></svg>
<div class="a" style="left:1717px;top:277px;width:5px;height:19px;background:#4f95ec"></div>
<div class="lt" style="left:1764px;top:284px;">4</div>
<div class="a" style="left:1888px;top:281px;width:11px;height:11px;border:1px solid #2c2c2c"></div>
<div class="a" style="left:1672px;top:319px;width:232px;height:1px;background:#393939"></div>
<div class="a" style="left:1695px;top:298px;width:1px;height:21px;background:#404040"></div>
<svg class="a" style="left:1701px;top:302px" width="11" height="14"><path d="M2.5 6V4a3 3 0 0 1 6 0v2" stroke="#cfcfcf" stroke-width="1.6" fill="none"/><rect x="0.5" y="6" width="10" height="7.5" fill="#cfcfcf"/><rect x="4.5" y="8" width="2" height="3" fill="#555"/></svg>
<div class="a" style="left:1717px;top:300px;width:5px;height:18px;background:#4f95ec"></div>
<div class="lt" style="left:1752px;top:307px;">Hintergrundrechteck</div>
<div class="a" style="left:1888px;top:304px;width:11px;height:11px;border:1px solid #2c2c2c"></div>
<div class="a" style="left:1672px;top:342px;width:232px;height:1px;background:#393939"></div>
<div class="a" style="left:1695px;top:320px;width:1px;height:22px;background:#404040"></div>
<svg class="a" style="left:1673px;top:325px" width="19" height="13"><path d="M1.2 6.5 C4.5 1.2 14.5 1.2 17.8 6.5 C14.5 11.8 4.5 11.8 1.2 6.5Z" fill="#4a4a4a" stroke="#d2d2d2" stroke-width="1.7"/><circle cx="9.5" cy="6.5" r="3.6" fill="#1c1c1c"/><circle cx="10.8" cy="5" r="1.2" fill="#e0e0e0"/></svg>
<svg class="a" style="left:1701px;top:324px" width="11" height="14"><path d="M2.5 6V4a3 3 0 0 1 6 0v2" stroke="#cfcfcf" stroke-width="1.6" fill="none"/><rect x="0.5" y="6" width="10" height="7.5" fill="#cfcfcf"/><rect x="4.5" y="8" width="2" height="3" fill="#555"/></svg>
<div class="a" style="left:1717px;top:322px;width:5px;height:19px;background:#e8782a"></div>
<div class="a" style="left:1728px;top:326px;width:0;height:0;border-style:solid;border-width:5px 0 5px 6px;border-color:transparent transparent transparent #dcdcdc"></div>
<div class="lt" style="left:1739px;top:329px;">Vorlage</div>
<div class="a" style="left:1888px;top:326px;width:11px;height:11px;border:1px solid #2c2c2c"></div>
<div class="a" style="left:1672px;top:503px;width:248px;height:20px;background:#4a4a4a;border-top:1px solid #5a5a5a"></div>
<div class="lt" style="left:1676px;top:509px;color:#c0c0c0">Seite: 1, 2 Ebenen</div>
<svg class="a" style="left:1840px;top:506px" width="15" height="14"><path d="M3 1h11v12H1V4z" fill="#d0d0d0"/><path d="M1 4h4v4H1z" fill="#4a4a4a"/><path d="M5 8l-4 0 4 4z" fill="#888"/></svg>
<svg class="a" style="left:1876px;top:505px" width="16" height="16"><path d="M2 4h12M6 4V2h4v2" stroke="#d0d0d0" stroke-width="1.5" fill="none"/><path d="M3 5h10l-1 10H4z" fill="none" stroke="#d0d0d0" stroke-width="1.5"/><path d="M6 7v6M8 7v6M10 7v6" stroke="#d0d0d0"/></svg>
<div class="a" style="left:1672px;top:523px;width:248px;height:3px;background:#2b2b2b"></div>
<div class="a" style="left:1672px;top:526px;width:248px;height:21px;background:#393939"></div>
<div class="a" style="left:1672px;top:526px;width:58px;height:21px;background:#3c3c3c"></div>
<div class="a" style="left:1730px;top:526px;width:82px;height:21px;background:#4a4a4a;border-top:1px solid #555"></div>
<div class="tabt" style="left:1680px;top:530px">Kontur</div>
<div class="tab" style="left:1736px;top:530px"><span class="ud"></span></div>
<div class="tabt act" style="left:1747px;top:530px">Farbfelder</div>
<div class="tabt" style="left:1821px;top:530px">Verlauf</div>
<div class="menuic" style="left:1897px;top:533px"></div>
<div class="a" style="left:1672px;top:547px;width:248px;height:30px;background:#4a4a4a"></div>
<svg class="a" style="left:1677px;top:549px" width="26" height="26"><rect x="1" y="2" width="12" height="13" fill="none" stroke="#9a9a9a" stroke-width="1.2" stroke-dasharray="3 1.5"/><text x="3.5" y="13" font-family="Liberation Sans" font-size="12" font-weight="bold" fill="#e0e0e0">?</text><path d="M14 2a6 6 0 0 1 6 6" stroke="#ddd" fill="none" stroke-width="1.3"/><path d="M18 7l2.5 3 2-3z" fill="#ddd"/><rect x="10" y="11" width="13" height="13" fill="#fff"/><rect x="12.5" y="13.5" width="8" height="8" fill="#777"/><path d="M10.5 23.5 L22.5 11.5" stroke="#e0201c" stroke-width="2.8"/></svg>
<div class="a" style="left:1716px;top:555px;width:14px;height:14px;border:2px solid #cfcfcf;box-shadow:0 0 0 2px #3a3a3a"></div>
<div class="a" style="left:1735px;top:551px;font-family:'Liberation Serif';font-size:19px;color:#7d7d7d;line-height:20px">T</div>
<div class="lt" style="left:1785px;top:558px;color:#c8c8c8">Farbton:</div>
<div class="fld" style="left:1830px;top:554px;width:37px;height:15px;font-size:10.5px;padding-top:1px">100</div>
<div class="arb" style="left:1868px;top:554px;height:15px"></div>
<div class="lt" style="left:1884px;top:559px;color:#c8c8c8">%</div>
<div class="a" style="left:1672px;top:577px;width:232px;height:361px;background:#4a4a4a"></div>
<div class="a" style="left:1904px;top:577px;width:16px;height:361px;background:#3c3c3c"></div>
<div class="a" style="left:1908px;top:582px;width:0;height:0;border-style:solid;border-width:0 5px 6px 5px;border-color:transparent transparent #777"></div>
<div class="a" style="left:1908px;top:926px;width:0;height:0;border-style:solid;border-width:6px 5px 0 5px;border-color:#777 transparent transparent"></div>
<div class="a" style="left:1672px;top:600px;width:232px;height:1px;background:#393939"></div>
<svg class="a" style="left:1689px;top:581px" width="16" height="16"><rect x="1" y="1" width="14" height="14" fill="#fff" stroke="#111" stroke-width="2"/><path d="M2 14 L14 2" stroke="#e0201c" stroke-width="2.5"/></svg>
<div class="lt" style="left:1708px;top:585px;color:#c4c4c4">[Ohne]</div>
<svg class="a" style="left:1847px;top:582px" width="15" height="15"><path d="M1 1 L14 14 M14 1 L1 14" stroke="#d8d8d8" stroke-width="1.6"/><path d="M9 3l3-2 2 2-2 3z" fill="#d8d8d8"/></svg>
<svg class="a" style="left:1884px;top:582px" width="15" height="15"><rect x="0.5" y="0.5" width="14" height="14" fill="#d4d4d4" stroke="#bbb"/><path d="M2 13 L13 2" stroke="#e0201c" stroke-width="1.3"/></svg>
<div class="a" style="left:1672px;top:624px;width:232px;height:1px;background:#393939"></div>
<div class="a" style="left:1689px;top:605px;width:16px;height:16px;background:#ffffff;border:2px solid #111"></div>
<div class="lt" style="left:1708px;top:609px;color:#c4c4c4">[Papier]</div>
<div class="a" style="left:1672px;top:648px;width:232px;height:1px;background:#393939"></div>
<div class="a" style="left:1689px;top:629px;width:16px;height:16px;background:#000000;border:2px solid #111"></div>
<div class="lt" style="left:1708px;top:633px;color:#c4c4c4">[Schwarz]</div>
<svg class="a" style="left:1847px;top:630px" width="15" height="15"><path d="M1 1 L14 14 M14 1 L1 14" stroke="#d8d8d8" stroke-width="1.6"/><path d="M9 3l3-2 2 2-2 3z" fill="#d8d8d8"/></svg>
<div class="a" style="left:1866px;top:630px;width:14px;height:14px;border:2px solid #d0d0d0;background:repeating-conic-gradient(#888 0 25%,#5e5e5e 0 50%) 0 0/2px 2px"></div>
<svg class="a" style="left:1885px;top:630px" width="14" height="14"><rect width="14" height="14" fill="#eee"/><path d="M1 1h12L7 7z" fill="#e820d8"/><path d="M13 1v12L7 7z" fill="#f0e010"/><path d="M13 13H1L7 7z" fill="#000"/><path d="M1 13V1L7 7z" fill="#10d8e8"/></svg>
<div class="a" style="left:1672px;top:672px;width:232px;height:1px;background:#393939"></div>
<div class="a" style="left:1689px;top:653px;width:16px;height:16px;background:#000000;border:2px solid #111"></div>
<div class="lt" style="left:1708px;top:657px;color:#c4c4c4">[Passermarken]</div>
<svg class="a" style="left:1847px;top:654px" width="15" height="15"><path d="M1 1 L14 14 M14 1 L1 14" stroke="#d8d8d8" stroke-width="1.6"/><path d="M9 3l3-2 2 2-2 3z" fill="#d8d8d8"/></svg>
<svg class="a" style="left:1884px;top:654px" width="15" height="15"><rect x="0.5" y="0.5" width="14" height="14" fill="#5a5a5a" stroke="#cfcfcf"/><circle cx="7.5" cy="7.5" r="3.5" fill="none" stroke="#ddd" stroke-width="1.3"/><path d="M7.5 2v11M2 7.5h11" stroke="#ddd"/></svg>
<div class="a" style="left:1672px;top:696px;width:232px;height:1px;background:#393939"></div>
<div class="a" style="left:1689px;top:677px;width:16px;height:16px;background:#e8862a;border:2px solid #111"></div>
<div class="lt" style="left:1708px;top:681px;color:#c4c4c4">bleed area</div>
<div class="a" style="left:1866px;top:678px;width:14px;height:14px;border:2px solid #c8c8c8;background:#4a4a4a"><div style="position:absolute;left:3px;top:3px;width:4px;height:4px;border-radius:50%;background:#aaa;box-shadow:0 0 0 1px #ccc"></div></div>
<svg class="a" style="left:1885px;top:678px" width="14" height="14"><rect width="14" height="14" fill="#eee"/><path d="M1 1h12L7 7z" fill="#e820d8"/><path d="M13 1v12L7 7z" fill="#f0e010"/><path d="M13 13H1L7 7z" fill="#000"/><path d="M1 13V1L7 7z" fill="#10d8e8"/></svg>
<div class="a" style="left:1672px;top:720px;width:232px;height:1px;background:#393939"></div>
<div class="a" style="left:1689px;top:701px;width:16px;height:16px;background:#b1b4ae;border:2px solid #111"></div>
<div class="lt" style="left:1708px;top:705px;color:#c4c4c4">safety distance</div>
<div class="a" style="left:1866px;top:702px;width:14px;height:14px;border:2px solid #c8c8c8;background:#4a4a4a"><div style="position:absolute;left:3px;top:3px;width:4px;height:4px;border-radius:50%;background:#aaa;box-shadow:0 0 0 1px #ccc"></div></div>
<svg class="a" style="left:1885px;top:702px" width="14" height="14"><rect width="14" height="14" fill="#eee"/><path d="M1 1h12L7 7z" fill="#e820d8"/><path d="M13 1v12L7 7z" fill="#f0e010"/><path d="M13 13H1L7 7z" fill="#000"/><path d="M1 13V1L7 7z" fill="#10d8e8"/></svg>
<div class="a" style="left:1672px;top:744px;width:232px;height:1px;background:#393939"></div>
<div class="a" style="left:1689px;top:725px;width:16px;height:16px;background:#474a45;border:2px solid #111"></div>
<div class="lt" style="left:1708px;top:729px;color:#c4c4c4">infos</div>
<div class="a" style="left:1866px;top:726px;width:14px;height:14px;border:2px solid #c8c8c8;background:#4a4a4a"><div style="position:absolute;left:3px;top:3px;width:4px;height:4px;border-radius:50%;background:#aaa;box-shadow:0 0 0 1px #ccc"></div></div>
<svg class="a" style="left:1885px;top:726px" width="14" height="14"><rect width="14" height="14" fill="#eee"/><path d="M1 1h12L7 7z" fill="#e820d8"/><path d="M13 1v12L7 7z" fill="#f0e010"/><path d="M13 13H1L7 7z" fill="#000"/><path d="M1 13V1L7 7z" fill="#10d8e8"/></svg>
<div class="a" style="left:1672px;top:768px;width:232px;height:1px;background:#393939"></div>
<div class="a" style="left:1689px;top:749px;width:16px;height:16px;background:#b5b8b2;border:2px solid #111"></div>
<div class="lt" style="left:1708px;top:753px;color:#c4c4c4">sides</div>
<div class="a" style="left:1866px;top:750px;width:14px;height:14px;border:2px solid #c8c8c8;background:#4a4a4a"><div style="position:absolute;left:3px;top:3px;width:4px;height:4px;border-radius:50%;background:#aaa;box-shadow:0 0 0 1px #ccc"></div></div>
<svg class="a" style="left:1885px;top:750px" width="14" height="14"><rect width="14" height="14" fill="#eee"/><path d="M1 1h12L7 7z" fill="#e820d8"/><path d="M13 1v12L7 7z" fill="#f0e010"/><path d="M13 13H1L7 7z" fill="#000"/><path d="M1 13V1L7 7z" fill="#10d8e8"/></svg>
<div class="a" style="left:1672px;top:792px;width:232px;height:1px;background:#393939"></div>
<div class="a" style="left:1689px;top:773px;width:16px;height:16px;background:#a6dbe0;border:2px solid #111"></div>
<div class="lt" style="left:1708px;top:777px;color:#c4c4c4">C=35 M=0 Y=15 K=0</div>
<div class="a" style="left:1866px;top:774px;width:14px;height:14px;border:2px solid #d0d0d0;background:repeating-conic-gradient(#888 0 25%,#5e5e5e 0 50%) 0 0/2px 2px"></div>
<svg class="a" style="left:1885px;top:774px" width="14" height="14"><rect width="14" height="14" fill="#eee"/><path d="M1 1h12L7 7z" fill="#e820d8"/><path d="M13 1v12L7 7z" fill="#f0e010"/><path d="M13 13H1L7 7z" fill="#000"/><path d="M1 13V1L7 7z" fill="#10d8e8"/></svg>
<div class="a" style="left:1672px;top:816px;width:232px;height:1px;background:#393939"></div>
<div class="a" style="left:1689px;top:797px;width:16px;height:16px;background:#56b3c9;border:2px solid #111"></div>
<div class="lt" style="left:1708px;top:801px;color:#c4c4c4">C=70 M=0 Y=20 K=0</div>
<div class="a" style="left:1866px;top:798px;width:14px;height:14px;border:2px solid #d0d0d0;background:repeating-conic-gradient(#888 0 25%,#5e5e5e 0 50%) 0 0/2px 2px"></div>
<svg class="a" style="left:1885px;top:798px" width="14" height="14"><rect width="14" height="14" fill="#eee"/><path d="M1 1h12L7 7z" fill="#e820d8"/><path d="M13 1v12L7 7z" fill="#f0e010"/><path d="M13 13H1L7 7z" fill="#000"/><path d="M1 13V1L7 7z" fill="#10d8e8"/></svg>
<div class="a" style="left:1672px;top:840px;width:232px;height:1px;background:#393939"></div>
<div class="a" style="left:1689px;top:821px;width:16px;height:16px;background:#2995b2;border:2px solid #111"></div>
<div class="lt" style="left:1708px;top:825px;color:#c4c4c4">C=80 M=10 Y=20 K=10</div>
<div class="a" style="left:1866px;top:822px;width:14px;height:14px;border:2px solid #d0d0d0;background:repeating-conic-gradient(#888 0 25%,#5e5e5e 0 50%) 0 0/2px 2px"></div>
<svg class="a" style="left:1885px;top:822px" width="14" height="14"><rect width="14" height="14" fill="#eee"/><path d="M1 1h12L7 7z" fill="#e820d8"/><path d="M13 1v12L7 7z" fill="#f0e010"/><path d="M13 13H1L7 7z" fill="#000"/><path d="M1 13V1L7 7z" fill="#10d8e8"/></svg>
<div class="a" style="left:1672px;top:864px;width:232px;height:1px;background:#393939"></div>
<div class="a" style="left:1689px;top:845px;width:16px;height:16px;background:#3e84a7;border:2px solid #111"></div>
<div class="lt" style="left:1708px;top:849px;color:#c4c4c4">C=80 M=30 Y=20 K=5</div>
<div class="a" style="left:1866px;top:846px;width:14px;height:14px;border:2px solid #d0d0d0;background:repeating-conic-gradient(#888 0 25%,#5e5e5e 0 50%) 0 0/2px 2px"></div>
<svg class="a" style="left:1885px;top:846px" width="14" height="14"><rect width="14" height="14" fill="#eee"/><path d="M1 1h12L7 7z" fill="#e820d8"/><path d="M13 1v12L7 7z" fill="#f0e010"/><path d="M13 13H1L7 7z" fill="#000"/><path d="M1 13V1L7 7z" fill="#10d8e8"/></svg>
<div class="a" style="left:1672px;top:888px;width:232px;height:1px;background:#393939"></div>
<div class="a" style="left:1689px;top:869px;width:16px;height:16px;background:#2972a9;border:2px solid #111"></div>
<div class="lt" style="left:1708px;top:873px;color:#c4c4c4">C=85 M=35 Y=10 K=15</div>
<div class="a" style="left:1866px;top:870px;width:14px;height:14px;border:2px solid #d0d0d0;background:repeating-conic-gradient(#888 0 25%,#5e5e5e 0 50%) 0 0/2px 2px"></div>
<svg class="a" style="left:1885px;top:870px" width="14" height="14"><rect width="14" height="14" fill="#eee"/><path d="M1 1h12L7 7z" fill="#e820d8"/><path d="M13 1v12L7 7z" fill="#f0e010"/><path d="M13 13H1L7 7z" fill="#000"/><path d="M1 13V1L7 7z" fill="#10d8e8"/></svg>
<div class="a" style="left:1672px;top:912px;width:232px;height:1px;background:#393939"></div>
<div class="a" style="left:1689px;top:893px;width:16px;height:16px;background:#e8782a;border:2px solid #111"></div>
<div class="lt" style="left:1708px;top:897px;color:#c4c4c4">C=0 M=70 Y=100 K=0</div>
<div class="a" style="left:1866px;top:894px;width:14px;height:14px;border:2px solid #d0d0d0;background:repeating-conic-gradient(#888 0 25%,#5e5e5e 0 50%) 0 0/2px 2px"></div>
<svg class="a" style="left:1885px;top:894px" width="14" height="14"><rect width="14" height="14" fill="#eee"/><path d="M1 1h12L7 7z" fill="#e820d8"/><path d="M13 1v12L7 7z" fill="#f0e010"/><path d="M13 13H1L7 7z" fill="#000"/><path d="M1 13V1L7 7z" fill="#10d8e8"/></svg>
<div class="a" style="left:1672px;top:938px;width:248px;height:23px;background:#4a4a4a;border-top:1px solid #5a5a5a"></div>
<svg class="a" style="left:1765px;top:942px" width="22" height="16"><rect x="1" y="1" width="14" height="12" fill="#ddd"/><path d="M1 5h14M1 9h14M5 1v12M10 1v12" stroke="#333"/><circle cx="12.5" cy="7" r="1.5" fill="#111"/><circle cx="3" cy="11" r="1.5" fill="#111"/><path d="M17 12h4l-2 3z" fill="#ddd"/></svg>
<svg class="a" style="left:1803px;top:943px" width="17" height="14"><path d="M1 3h6l2 2h7v8H1z" fill="#d4d4d4"/></svg>
<svg class="a" style="left:1840px;top:942px" width="15" height="14"><path d="M3 1h11v12H1V4z" fill="#d0d0d0"/><path d="M1 4h4v4H1z" fill="#4a4a4a"/></svg>
<svg class="a" style="left:1876px;top:941px" width="16" height="16"><path d="M2 4h12M6 4V2h4v2" stroke="#888" stroke-width="1.5" fill="none"/><path d="M3 5h10l-1 10H4z" fill="none" stroke="#888" stroke-width="1.5"/><path d="M6 7v6M8 7v6M10 7v6" stroke="#888"/></svg>
<div class="a" style="left:1672px;top:961px;width:248px;height:4px;background:#2b2b2b"></div>
<div class="a" style="left:1672px;top:965px;width:248px;height:20px;background:#393939"></div>
<div class="a" style="left:1672px;top:965px;width:50px;height:20px;background:#3c3c3c"></div>
<div class="a" style="left:1722px;top:965px;width:83px;height:20px;background:#4a4a4a;border-top:1px solid #555"></div>
<div class="tabt" style="left:1680px;top:968px;width:41px;overflow:hidden;white-space:nowrap">Effekte</div>
<div class="tab" style="left:1727px;top:969px"><span class="ud"></span></div>
<div class="tabt act" style="left:1738px;top:968px">Ausrichten</div>
<div class="tabt" style="left:1814px;top:968px">Pathfinder</div>
<div class="menuic" style="left:1897px;top:971px"></div>
<div class="a" style="left:1672px;top:985px;width:248px;height:5px;background:#2f2f2f"></div>
<div class="a" style="left:1672px;top:990px;width:248px;height:20px;background:#393939"></div>
<div class="a" style="left:1672px;top:990px;width:30px;height:20px;background:#3c3c3c"></div>
<div class="a" style="left:1702px;top:990px;width:110px;height:20px;background:#4a4a4a;border-top:1px solid #555"></div>
<div class="tabt" style="left:1680px;top:993px;width:21px;overflow:hidden;white-space:nowrap">Zeichen</div>
<div class="tab" style="left:1706px;top:994px"><span class="ud"></span></div>
<div class="tabt act" style="left:1716px;top:993px">Zeichenformate</div>
<div class="tabt" style="left:1821px;top:993px">Abs</div>
<div class="tabt" style="left:1850px;top:993px;width:21px;overflow:hidden;white-space:nowrap">Text</div>
<div class="menuic" style="left:1897px;top:996px"></div>
<div class="a" style="left:1672px;top:1010px;width:248px;height:20px;background:#4a4a4a;border-top:1px solid #3a3a3a"></div><div class="a" style="left:1668px;top:180px;width:237px;height:119px;border:5px solid #f00"></div>
<div class="a" style="left:1667px;top:790px;width:240px;height:101px;border:6px solid #f00"></div>
</body></html>
